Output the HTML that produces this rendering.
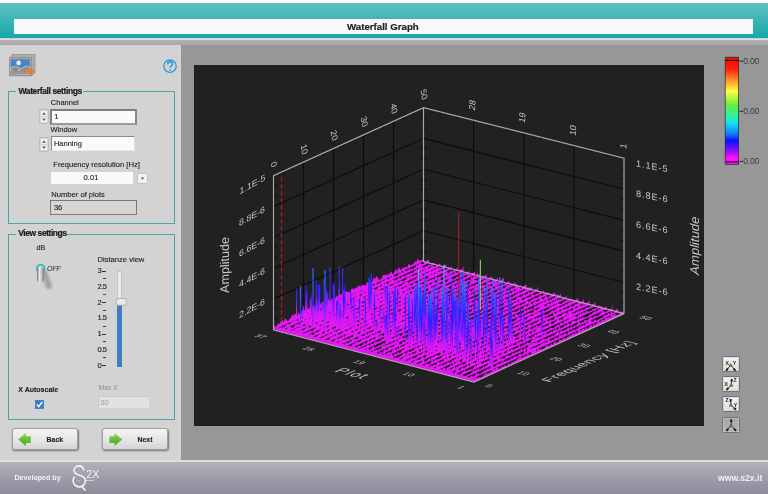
<!DOCTYPE html>
<html><head><meta charset="utf-8"><style>
*{box-sizing:border-box}
html{background:#a0a0a0}
body{margin:0;width:768px;height:494px;overflow:hidden;position:relative;font-family:"Liberation Sans", sans-serif;background:#d3d3d3;filter:blur(0.4px)}
.a{position:absolute}
.t{position:absolute;white-space:nowrap;line-height:1}
</style></head>
<body>
<div class="a" style="left:0;top:0;width:768px;height:2.8px;background:#fcfcfc"></div>
<div class="a" style="left:0;top:2.8px;width:768px;height:35.7px;background:linear-gradient(#5fc0c1,#17a7a8)"></div>
<div class="a" style="left:0;top:38.5px;width:768px;height:1.5px;background:#cfe3e3"></div>
<div class="a" style="left:0;top:40px;width:768px;height:5px;background:linear-gradient(#b3b3b3,#a6a6a6)"></div>
<div class="a" style="left:14px;top:19.2px;width:739.2px;height:14.8px;background:#f8f8f8"></div>
<div class="t" style="left:347px;top:22px;font-size:9.7px;font-weight:bold;color:#222;-webkit-text-stroke:0.2px #222">Waterfall Graph</div>
<div class="a" style="left:0;top:45px;width:181px;height:414.5px;background:#d3d3d3"></div>
<div class="a" style="left:181px;top:45px;width:587px;height:414.5px;background:#979797"></div>
<div class="a" style="left:0;top:459.5px;width:768px;height:2.5px;background:linear-gradient(#c8c8c8,#e6e6e8 40%,#dcdce0)"></div>
<div class="a" style="left:0;top:462px;width:768px;height:32px;background:linear-gradient(#b1b1bd,#8b8b99)"></div>
<div class="t" style="left:14.5px;top:474.5px;font-size:7.1px;font-weight:bold;color:#f2f2f2">Developed by</div>
<div class="t" style="left:718px;top:473.5px;font-size:8.65px;font-weight:bold;color:#f2f2f2">www.s2x.it</div>
<svg class="a" style="left:0;top:45px" width="181" height="40" viewBox="0 45 181 40">
<rect x="12.5" y="54.5" width="22.5" height="18" fill="#c4c4c4" stroke="#9a9a9a" stroke-width="1"/>
<rect x="11" y="56" width="22.5" height="18.5" fill="#bdbdbd" stroke="#9a9a9a" stroke-width="1"/>
<rect x="9.7" y="57.7" width="22" height="18" fill="#a9a9a9" stroke="#8a8a8a" stroke-width="1"/>
<rect x="11" y="59.3" width="18.8" height="14.5" fill="#4a86c5"/>
<circle cx="18.6" cy="62.9" r="2.3" fill="#e8eef4"/>
<rect x="11" y="69.5" width="18.8" height="4.3" fill="#9a9a9a"/>
<ellipse cx="15.2" cy="69.2" rx="4.6" ry="2.4" fill="#8c8c8c" stroke="#e8e8e8" stroke-width="0.7"/>
<path d="M18.5 70.5 Q22 67.8 26.4 66 Q28.5 66.4 29.8 67.3 L29.8 73.8 L18.5 73.8 Z" fill="#8e8e8e" stroke="#e8e8e8" stroke-width="0.6"/>
<rect x="11" y="71" width="18.8" height="2.8" fill="#959595"/>
<path d="M23.8 70 L29.5 70 L29.5 67.4 L34.8 71 L29.5 74.6 L29.5 72.1 L23.8 72.1 Z" fill="#f27a1a"/>
</svg>
<svg class="a" style="left:160px;top:55.6px" width="20" height="20" viewBox="160 55 20 20">
<circle cx="170" cy="65.2" r="6.2" fill="none" stroke="#2c9bd9" stroke-width="1.3"/>
<path d="M167.6 63.4 Q167.8 60.9 170.2 60.9 Q172.6 60.9 172.6 63.1 Q172.6 64.4 171.2 65.1 Q170.2 65.6 170.2 66.8" fill="none" stroke="#2c9bd9" stroke-width="1.6"/>
<circle cx="170.2" cy="68.9" r="0.95" fill="#2c9bd9"/>
</svg>
<div class="a" style="left:8.2px;top:90.8px;width:166.5px;height:133px;border:1.5px solid #4aa6a6"></div>
<div class="a" style="left:16.2px;top:87.8px;width:67px;height:6px;background:#d3d3d3"></div>
<div class="t" style="left:18.5px;top:86.5px;font-size:8.5px;font-weight:bold;letter-spacing:-0.4px;color:#1a1a1a;-webkit-text-stroke:0.2px #1a1a1a">Waterfall settings</div>
<div class="a" style="left:8px;top:233.5px;width:166.8px;height:186.5px;border:1.5px solid #4aa6a6"></div>
<div class="a" style="left:16px;top:230.5px;width:50px;height:6px;background:#d3d3d3"></div>
<div class="t" style="left:18.3px;top:229.3px;font-size:8.5px;font-weight:bold;letter-spacing:-0.45px;color:#1a1a1a;-webkit-text-stroke:0.2px #1a1a1a">View settings</div>
<div class="t" style="left:50.8px;top:98.5px;font-size:7.5px;color:#1c1c1c;-webkit-text-stroke:0.12px #1c1c1c;">Channel</div>
<svg class="a" style="left:38.5px;top:109px" width="10" height="15" viewBox="0 0 10 15">
<rect x="0.5" y="0.5" width="9" height="14" rx="1.5" fill="#dcdcdc" stroke="#bdbdbd" stroke-width="1"/>
<rect x="1.5" y="1.5" width="7" height="5.8" rx="0.8" fill="#f4f4f4" stroke="#c8c8c8" stroke-width="0.6"/>
<rect x="1.5" y="7.7" width="7" height="5.8" rx="0.8" fill="#f4f4f4" stroke="#c8c8c8" stroke-width="0.6"/>
<path d="M2.9 5.8 L5 3.3 L7.1 5.8 Z" fill="#666"/>
<path d="M2.9 9.4 L5 11.9 L7.1 9.4 Z" fill="#666"/>
</svg>
<div class="a" style="left:50px;top:108.5px;width:87px;height:16px;background:#fafafa;border:2px solid #7e7e7e;border-bottom-color:#9a9a9a;border-right-color:#8a8a8a"></div>
<div class="t" style="left:54.3px;top:113px;font-size:7.5px;color:#1c1c1c;-webkit-text-stroke:0.12px #1c1c1c;">1</div>
<div class="t" style="left:50.5px;top:125.5px;font-size:7.5px;color:#1c1c1c;-webkit-text-stroke:0.12px #1c1c1c;">Window</div>
<svg class="a" style="left:38.5px;top:136.5px" width="10" height="15" viewBox="0 0 10 15">
<rect x="0.5" y="0.5" width="9" height="14" rx="1.5" fill="#dcdcdc" stroke="#bdbdbd" stroke-width="1"/>
<rect x="1.5" y="1.5" width="7" height="5.8" rx="0.8" fill="#f4f4f4" stroke="#c8c8c8" stroke-width="0.6"/>
<rect x="1.5" y="7.7" width="7" height="5.8" rx="0.8" fill="#f4f4f4" stroke="#c8c8c8" stroke-width="0.6"/>
<path d="M2.9 5.8 L5 3.3 L7.1 5.8 Z" fill="#666"/>
<path d="M2.9 9.4 L5 11.9 L7.1 9.4 Z" fill="#666"/>
</svg>
<div class="a" style="left:50.8px;top:136px;width:84px;height:14.5px;background:#fafafa;border-top:1.5px solid #8a8a8a;border-left:1.5px solid #8a8a8a;border-bottom:1px solid #e8e8e8;border-right:1px solid #e0e0e0"></div>
<div class="t" style="left:53.9px;top:139.5px;font-size:7.5px;color:#1c1c1c;-webkit-text-stroke:0.12px #1c1c1c;">Hanning</div>
<div class="t" style="left:53.3px;top:161px;font-size:7.6px;color:#1c1c1c;-webkit-text-stroke:0.12px #1c1c1c;">Frequency resolution [Hz]</div>
<div class="a" style="left:50.8px;top:171.5px;width:82px;height:12px;background:#fafafa"></div>
<div class="t" style="left:83.6px;top:174px;font-size:7.6px;color:#1c1c1c;-webkit-text-stroke:0.12px #1c1c1c;">0.01</div>
<svg class="a" style="left:137px;top:172.8px" width="11" height="11" viewBox="0 0 11 11">
<rect x="0.5" y="0.5" width="10" height="10" rx="2" fill="#f2f2f2" stroke="#b8b8b8" stroke-width="0.8"/>
<path d="M3.6 4.6 L5.5 6.8 L7.4 4.6 Z" fill="#606060"/></svg>
<div class="t" style="left:51.3px;top:190.5px;font-size:7.6px;color:#1c1c1c;-webkit-text-stroke:0.12px #1c1c1c;">Number of plots</div>
<div class="a" style="left:50.2px;top:199.8px;width:86.7px;height:15.6px;background:#d6d6d6;border:1.6px solid #7a7a7a"></div>
<div class="t" style="left:53.9px;top:203.5px;font-size:7.6px;color:#1c1c1c;-webkit-text-stroke:0.12px #1c1c1c;">36</div>
<div class="t" style="left:36.4px;top:243.8px;font-size:7.3px;color:#1c1c1c;-webkit-text-stroke:0.12px #1c1c1c;">dB</div>
<svg class="a" style="left:28px;top:258px" width="36" height="36" viewBox="28 258 36 36">
<defs><linearGradient id="tg" x1="0" x2="1"><stop offset="0" stop-color="#707070"/><stop offset="0.35" stop-color="#ececec"/><stop offset="0.7" stop-color="#b4b4b4"/><stop offset="1" stop-color="#7a7a7a"/></linearGradient>
<filter id="bl" x="-50%" y="-50%" width="200%" height="200%"><feGaussianBlur stdDeviation="1.3"/></filter></defs>
<path d="M41.5 271 L46.5 270 L52 286 Q52 289 49 289 L46 288 Z" fill="#000" opacity="0.22" filter="url(#bl)"/>
<circle cx="40.7" cy="268.6" r="3.9" fill="#dcdcdc" stroke="#3cbcbc" stroke-width="2"/>
<rect x="37.1" y="266.8" width="7" height="15.7" rx="3.5" fill="url(#tg)"/>
<ellipse cx="39.6" cy="277.4" rx="1.2" ry="0.8" fill="#fafafa" opacity="0.8"/>
</svg>
<div class="t" style="left:47.1px;top:265.2px;font-size:7.2px;color:#3a3a48;-webkit-text-stroke:0.12px #3a3a48;font-style:italic;letter-spacing:-0.3px">OFF</div>
<div class="t" style="left:97.5px;top:255.8px;font-size:7.6px;color:#1c1c1c;-webkit-text-stroke:0.12px #1c1c1c;">Distanze view</div>
<div class="t" style="left:97.5px;top:267.1px;font-size:7.6px;color:#1c1c1c;-webkit-text-stroke:0.12px #1c1c1c;letter-spacing:-0.5px">3</div>
<div class="a" style="left:101.5px;top:270.5px;width:4px;height:1.1px;background:#333"></div>
<div class="a" style="left:103.2px;top:278.4px;width:2.6px;height:1.1px;background:#444"></div>
<div class="t" style="left:97.5px;top:282.85px;font-size:7.6px;color:#1c1c1c;-webkit-text-stroke:0.12px #1c1c1c;letter-spacing:-0.5px">2.5</div>
<div class="a" style="left:103.2px;top:294.15px;width:2.6px;height:1.1px;background:#444"></div>
<div class="t" style="left:97.5px;top:298.6px;font-size:7.6px;color:#1c1c1c;-webkit-text-stroke:0.12px #1c1c1c;letter-spacing:-0.5px">2</div>
<div class="a" style="left:101.5px;top:302.0px;width:4px;height:1.1px;background:#333"></div>
<div class="a" style="left:103.2px;top:309.9px;width:2.6px;height:1.1px;background:#444"></div>
<div class="t" style="left:97.5px;top:314.35px;font-size:7.6px;color:#1c1c1c;-webkit-text-stroke:0.12px #1c1c1c;letter-spacing:-0.5px">1.5</div>
<div class="a" style="left:103.2px;top:325.65px;width:2.6px;height:1.1px;background:#444"></div>
<div class="t" style="left:97.5px;top:330.1px;font-size:7.6px;color:#1c1c1c;-webkit-text-stroke:0.12px #1c1c1c;letter-spacing:-0.5px">1</div>
<div class="a" style="left:101.5px;top:333.5px;width:4px;height:1.1px;background:#333"></div>
<div class="a" style="left:103.2px;top:341.4px;width:2.6px;height:1.1px;background:#444"></div>
<div class="t" style="left:97.5px;top:345.85px;font-size:7.6px;color:#1c1c1c;-webkit-text-stroke:0.12px #1c1c1c;letter-spacing:-0.5px">0.5</div>
<div class="a" style="left:103.2px;top:357.15px;width:2.6px;height:1.1px;background:#444"></div>
<div class="t" style="left:97.5px;top:361.6px;font-size:7.6px;color:#1c1c1c;-webkit-text-stroke:0.12px #1c1c1c;letter-spacing:-0.5px">0</div>
<div class="a" style="left:101.5px;top:365.0px;width:4px;height:1.1px;background:#333"></div>
<div class="a" style="left:117.3px;top:270.5px;width:5.2px;height:31px;background:#e9ebed;border:1px solid #c0c4c8;border-bottom:none"></div>
<div class="a" style="left:117.3px;top:303px;width:5.2px;height:63.5px;background:#3f7fc1"></div>
<svg class="a" style="left:114px;top:297px" width="14" height="10" viewBox="0 0 14 10">
<path d="M1.5 5 L3.5 1.5 L12.3 1.5 L12.3 8.3 L3.5 8.3 Z" fill="#e6e8ea" stroke="#a8a8a8" stroke-width="0.8"/></svg>
<div class="t" style="left:18.3px;top:385.5px;font-size:7.0px;color:#1c1c1c;-webkit-text-stroke:0.12px #1c1c1c;font-weight:bold">X Autoscale</div>
<svg class="a" style="left:34.5px;top:399.5px" width="9" height="9" viewBox="0 0 9 9">
<rect x="0.5" y="0.5" width="8" height="8" fill="#3b7ec6" stroke="#2e67a8" stroke-width="0.6"/>
<path d="M1.9 4.5 L3.7 6.6 L7.2 2.0" fill="none" stroke="#fff" stroke-width="1.3"/></svg>
<div class="t" style="left:98.4px;top:385.0px;font-size:6.9px;color:#9a9a9a;-webkit-text-stroke:0.12px #9a9a9a;">Max X</div>
<div class="a" style="left:98px;top:395.8px;width:50.8px;height:12.4px;background:#e2e2e2;border-top:1px solid #c8c8c8;border-left:1px solid #c8c8c8"></div>
<div class="t" style="left:100.5px;top:398.5px;font-size:7.4px;color:#a8a8a8;-webkit-text-stroke:0.12px #a8a8a8;">50</div>
<div class="a" style="left:11.5px;top:428.2px;width:66.4px;height:21.4px;border-radius:3px;background:linear-gradient(#f4f4f4,#e4e4e4 60%,#d4d4d4);border:1px solid #a0a0a0;box-shadow:0.5px 1px 1.5px rgba(0,0,0,0.45)"></div>
<svg class="a" style="left:0;top:0" width="181" height="460" viewBox="0 0 181 460"><defs><linearGradient id="gal" x1="0" y1="0" x2="0" y2="1"><stop offset="0" stop-color="#8fd456"/><stop offset="1" stop-color="#44a81c"/></linearGradient></defs><path d="M18.1 439.4 L25.8 432.9 L25.8 436.2 L30.8 436.2 L30.8 443 L25.8 443 L25.8 446 Z" fill="url(#gal)"/></svg>
<div class="t" style="left:46.6px;top:437.0px;font-size:6.9px;color:#1c1c1c;-webkit-text-stroke:0.12px #1c1c1c;font-weight:bold">Back</div>
<div class="a" style="left:102px;top:428.2px;width:66.4px;height:21.4px;border-radius:3px;background:linear-gradient(#f4f4f4,#e4e4e4 60%,#d4d4d4);border:1px solid #a0a0a0;box-shadow:0.5px 1px 1.5px rgba(0,0,0,0.45)"></div>
<svg class="a" style="left:0;top:0" width="181" height="460" viewBox="0 0 181 460"><defs><linearGradient id="gar" x1="0" y1="0" x2="0" y2="1"><stop offset="0" stop-color="#8fd456"/><stop offset="1" stop-color="#44a81c"/></linearGradient></defs><path d="M122.2 439.4 L114.5 432.9 L114.5 436.2 L109.5 436.2 L109.5 443 L114.5 443 L114.5 446 Z" fill="url(#gar)"/></svg>
<div class="t" style="left:137.5px;top:437.0px;font-size:6.9px;color:#1c1c1c;-webkit-text-stroke:0.12px #1c1c1c;font-weight:bold">Next</div>
<svg class="a" style="left:715px;top:50px" width="53" height="125" viewBox="715 50 53 125">
<defs><linearGradient id="cb" x1="0" y1="0" x2="0" y2="1">
<stop offset="0" stop-color="#ff0a0a"/><stop offset="0.08" stop-color="#ff2010"/><stop offset="0.17" stop-color="#ff8020"/><stop offset="0.30" stop-color="#ffff40"/>
<stop offset="0.44" stop-color="#60f040"/><stop offset="0.55" stop-color="#30f0a0"/><stop offset="0.62" stop-color="#10e0f0"/><stop offset="0.72" stop-color="#1080ff"/><stop offset="0.79" stop-color="#0a10ff"/><stop offset="0.90" stop-color="#9010ff"/><stop offset="0.96" stop-color="#ff10ff"/><stop offset="1" stop-color="#ff10ff"/></linearGradient></defs>
<rect x="724.8" y="56.8" width="14.2" height="108" fill="#333"/>
<rect x="725.6" y="57.6" width="12.6" height="2.3" fill="#ee1010"/>
<rect x="725.6" y="59.9" width="12.6" height="1.2" fill="#3a0000"/>
<rect x="725.6" y="61.1" width="12.6" height="100.6" fill="url(#cb)"/>
<rect x="725.6" y="161.3" width="12.6" height="1.2" fill="#3a003a"/>
<rect x="725.6" y="162.5" width="12.6" height="1.6" fill="#f010f0"/>
<path d="M739.5 61.2 h3.5 M739.5 111.3 h3.5 M739.5 161.4 h3.5" stroke="#2a2a2a" stroke-width="1"/>
</svg>
<div class="t" style="left:740.5px;top:56.6px;font-size:8.6px;color:#3a3a3a;letter-spacing:-0.2px">-0.00</div>
<div class="t" style="left:740.5px;top:106.7px;font-size:8.6px;color:#3a3a3a;letter-spacing:-0.2px">-0.00</div>
<div class="t" style="left:740.5px;top:156.8px;font-size:8.6px;color:#3a3a3a;letter-spacing:-0.2px">-0.00</div>
<div class="a" style="left:722.4px;top:356.4px;width:17.6px;height:15.8px;border-radius:1.5px;background:linear-gradient(#f4f4f4,#dedede);border:1px solid #747474;box-shadow:inset 0 0 0 0.6px #c8c8c8"></div>
<svg class="a" style="left:0;top:0" width="768" height="494" viewBox="0 0 768 494">
<path d="M730.7 365.0 L726.2 370.6M730.7 365.0 L735.4 370.6" stroke="#262626" stroke-width="0.8" fill="none"/>
<path d="M728.0 368.4 L726.2 370.6M733.6 368.5 L735.4 370.6" stroke="#1a1a1a" stroke-width="1.9" fill="none"/>
<path d="M729.0 366.3 L730.7 363.4 L732.4 366.3 Z" fill="#9a9a18" stroke="#3a3a10" stroke-width="0.5"/><text x="727.3" y="363.2" font-size="5.2" font-weight="bold" font-family="Liberation Sans" text-anchor="middle" dominant-baseline="central" fill="#1a1a1a">X</text><text x="734.6" y="363.2" font-size="5.2" font-weight="bold" font-family="Liberation Sans" text-anchor="middle" dominant-baseline="central" fill="#1a1a1a">Y</text></svg>
<div class="a" style="left:722.4px;top:376.4px;width:17.6px;height:15.8px;border-radius:1.5px;background:linear-gradient(#f4f4f4,#dedede);border:1px solid #747474;box-shadow:inset 0 0 0 0.6px #c8c8c8"></div>
<svg class="a" style="left:0;top:0" width="768" height="494" viewBox="0 0 768 494">
<path d="M731.3 385.0 L731.7 379.0M731.3 385.0 L726.5 389.8" stroke="#262626" stroke-width="0.8" fill="none"/>
<path d="M731.5 381.8 L731.7 379.0M728.5 387.8 L726.5 389.8" stroke="#1a1a1a" stroke-width="1.9" fill="none"/>
<path d="M729.6 386.3 L731.3 383.4 L733.0 386.3 Z" fill="#9a9a18" stroke="#3a3a10" stroke-width="0.5"/><text x="735.2" y="380.2" font-size="5.2" font-weight="bold" font-family="Liberation Sans" text-anchor="middle" dominant-baseline="central" fill="#1a1a1a">Z</text><text x="726.2" y="384.0" font-size="5.2" font-weight="bold" font-family="Liberation Sans" text-anchor="middle" dominant-baseline="central" fill="#1a1a1a">X</text></svg>
<div class="a" style="left:722.4px;top:396.4px;width:17.6px;height:15.8px;border-radius:1.5px;background:linear-gradient(#f4f4f4,#dedede);border:1px solid #747474;box-shadow:inset 0 0 0 0.6px #c8c8c8"></div>
<svg class="a" style="left:0;top:0" width="768" height="494" viewBox="0 0 768 494">
<path d="M730.9 405.0 L730.6 399.0M730.9 405.0 L735.9 409.8" stroke="#262626" stroke-width="0.8" fill="none"/>
<path d="M730.7 401.8 L730.6 399.0M733.9 407.9 L735.9 409.8" stroke="#1a1a1a" stroke-width="1.9" fill="none"/>
<path d="M729.2 406.3 L730.9 403.4 L732.6 406.3 Z" fill="#9a9a18" stroke="#3a3a10" stroke-width="0.5"/><text x="727.0" y="400.2" font-size="5.2" font-weight="bold" font-family="Liberation Sans" text-anchor="middle" dominant-baseline="central" fill="#1a1a1a">Z</text><text x="735.6" y="405.0" font-size="5.2" font-weight="bold" font-family="Liberation Sans" text-anchor="middle" dominant-baseline="central" fill="#1a1a1a">Y</text></svg>
<div class="a" style="left:722.4px;top:417px;width:17.6px;height:15.8px;border-radius:1.5px;background:linear-gradient(#a6a6a6,#b4b4b4);border:1px solid #747474;box-shadow:inset 0 0 0 0.6px #c8c8c8"></div>
<svg class="a" style="left:0;top:0" width="768" height="494" viewBox="0 0 768 494">
<path d="M731.2 425.4 L731.2 419.4M731.2 425.4 L726.4 430.8M731.2 425.4 L736.0 430.8" stroke="#262626" stroke-width="0.8" fill="none"/>
<path d="M731.2 422.2 L731.2 419.4M728.3 428.7 L726.4 430.8M734.1 428.7 L736.0 430.8" stroke="#1a1a1a" stroke-width="1.9" fill="none"/>
<path d="M729.5 426.7 L731.2 423.8 L732.9 426.7 Z" fill="#9a9a18" stroke="#3a3a10" stroke-width="0.5"/></svg>
<svg class="a" style="left:66px;top:462px" width="40" height="32" viewBox="66 462 40 32">
<path d="M83.8 470.7 C83.5 467.5 81.5 465.9 78.9 465.9 C76 465.9 74.1 468 74.1 470.4 C74.1 473.2 77 474.5 79.6 475.3 C83 476.3 85.4 478 85.4 480.8 C85.4 484.4 82.6 486.9 79.3 486.9 C76 486.9 73.1 484.4 73.1 480.8 C73.1 478.8 73.8 477.5 74.7 476.6" fill="none" stroke="#f6f6f6" stroke-width="1.6"/>
<path d="M81.6 486.2 L85.4 490.5" stroke="#f6f6f6" stroke-width="1.7"/>
<path d="M76.5 481 q1 -1.2 2 -0.3 q1 0.9 2 -0.5" stroke="#e6e6e6" stroke-width="0.6" fill="none"/>
<path d="M85.4 480.4 L94 480.4" stroke="#e4e4e4" stroke-width="0.8"/>
<text x="86.3" y="478.4" font-size="10.6" font-family="Liberation Sans" fill="#f6f6f6">2X</text>
</svg>
<div class="a" style="left:194px;top:64.5px;width:509.5px;height:361px;background:#212121"></div>
<svg class="a" style="left:0;top:0" width="768" height="494" viewBox="0 0 768 494">
<path d="M303.5,316.3L303.5,162.0M333.5,302.6L333.5,148.4M363.5,288.9L363.5,134.8M393.5,275.2L393.5,121.2M273.5,299.1L423.5,230.7M273.5,268.2L423.5,199.9M273.5,237.4L423.5,169.2M273.5,206.5L423.5,138.4M473.6,274.5L473.6,120.2M523.8,287.6L523.8,132.9M573.9,300.6L573.9,145.5M423.5,230.7L624.0,282.5M423.5,199.9L624.0,251.4M423.5,169.2L624.0,220.4M423.5,138.4L624.0,189.3" stroke="#0c0c0c" stroke-width="1.1" fill="none"/>
<path d="M273.5,319.7l3,-1.2M420.5,251.2l6,0M624.0,303.2l-3,-0.8M273.5,309.4l3,-1.2M420.5,241.0l6,0M624.0,292.9l-3,-0.8M273.5,288.8l3,-1.2M420.5,220.5l6,0M624.0,272.2l-3,-0.8M273.5,278.5l3,-1.2M420.5,210.2l6,0M624.0,261.8l-3,-0.8M273.5,257.9l3,-1.2M420.5,189.7l6,0M624.0,241.1l-3,-0.8M273.5,247.7l3,-1.2M420.5,179.4l6,0M624.0,230.7l-3,-0.8M273.5,227.1l3,-1.2M420.5,158.9l6,0M624.0,210.0l-3,-0.8M273.5,216.8l3,-1.2M420.5,148.6l6,0M624.0,199.6l-3,-0.8M273.5,196.2l3,-1.2M420.5,128.1l6,0M624.0,178.9l-3,-0.8M273.5,185.9l3,-1.2M420.5,117.9l6,0M624.0,168.6l-3,-0.8M283.5,171.1l0,3M293.5,166.5l0,3M313.5,157.5l0,3M323.5,152.9l0,3M343.5,143.9l0,3M353.5,139.3l0,3M373.5,130.3l0,3M383.5,125.7l0,3M403.5,116.7l0,3M413.5,112.1l0,3M440.2,111.8l0,3M456.9,116.0l0,3M490.3,124.5l0,3M507.0,128.7l0,3M540.5,137.1l0,3M557.2,141.3l0,3M590.6,149.8l0,3M607.3,154.0l0,3" stroke="#0a0a0a" stroke-width="1" fill="none"/>
<path d="M281.5,177 L281.5,328" stroke="#b3191c" stroke-width="1.3" stroke-dasharray="4.5,2.5" fill="none"/>
<path d="M273.5,330.0L423.5,261.5L624.0,313.6L474.0,382.0Z" fill="#1a1a1a"/>
<defs>
<linearGradient id="g0" gradientUnits="userSpaceOnUse" x1="0" y1="454.9" x2="0" y2="329.9" gradientTransform="skewY(-24.54)"><stop offset="0" stop-color="#ea16f6"/><stop offset="0.06" stop-color="#dc18f8"/><stop offset="0.13" stop-color="#7020ff"/><stop offset="0.24" stop-color="#2a1cff"/><stop offset="0.45" stop-color="#2468ff"/><stop offset="0.6" stop-color="#20c8ee"/><stop offset="0.72" stop-color="#70e040"/><stop offset="0.85" stop-color="#f0e030"/><stop offset="1" stop-color="#e02020"/></linearGradient>
<linearGradient id="g1" gradientUnits="userSpaceOnUse" x1="0" y1="459.0" x2="0" y2="334.0" gradientTransform="skewY(-24.54)"><stop offset="0" stop-color="#ea16f6"/><stop offset="0.06" stop-color="#dc18f8"/><stop offset="0.13" stop-color="#7020ff"/><stop offset="0.24" stop-color="#2a1cff"/><stop offset="0.45" stop-color="#2468ff"/><stop offset="0.6" stop-color="#20c8ee"/><stop offset="0.72" stop-color="#70e040"/><stop offset="0.85" stop-color="#f0e030"/><stop offset="1" stop-color="#e02020"/></linearGradient>
<linearGradient id="g2" gradientUnits="userSpaceOnUse" x1="0" y1="463.1" x2="0" y2="338.1" gradientTransform="skewY(-24.54)"><stop offset="0" stop-color="#ea16f6"/><stop offset="0.06" stop-color="#dc18f8"/><stop offset="0.13" stop-color="#7020ff"/><stop offset="0.24" stop-color="#2a1cff"/><stop offset="0.45" stop-color="#2468ff"/><stop offset="0.6" stop-color="#20c8ee"/><stop offset="0.72" stop-color="#70e040"/><stop offset="0.85" stop-color="#f0e030"/><stop offset="1" stop-color="#e02020"/></linearGradient>
<linearGradient id="g3" gradientUnits="userSpaceOnUse" x1="0" y1="467.2" x2="0" y2="342.2" gradientTransform="skewY(-24.54)"><stop offset="0" stop-color="#ea16f6"/><stop offset="0.06" stop-color="#dc18f8"/><stop offset="0.13" stop-color="#7020ff"/><stop offset="0.24" stop-color="#2a1cff"/><stop offset="0.45" stop-color="#2468ff"/><stop offset="0.6" stop-color="#20c8ee"/><stop offset="0.72" stop-color="#70e040"/><stop offset="0.85" stop-color="#f0e030"/><stop offset="1" stop-color="#e02020"/></linearGradient>
<linearGradient id="g4" gradientUnits="userSpaceOnUse" x1="0" y1="471.3" x2="0" y2="346.3" gradientTransform="skewY(-24.54)"><stop offset="0" stop-color="#ea16f6"/><stop offset="0.06" stop-color="#dc18f8"/><stop offset="0.13" stop-color="#7020ff"/><stop offset="0.24" stop-color="#2a1cff"/><stop offset="0.45" stop-color="#2468ff"/><stop offset="0.6" stop-color="#20c8ee"/><stop offset="0.72" stop-color="#70e040"/><stop offset="0.85" stop-color="#f0e030"/><stop offset="1" stop-color="#e02020"/></linearGradient>
<linearGradient id="g5" gradientUnits="userSpaceOnUse" x1="0" y1="475.4" x2="0" y2="350.4" gradientTransform="skewY(-24.54)"><stop offset="0" stop-color="#ea16f6"/><stop offset="0.06" stop-color="#dc18f8"/><stop offset="0.13" stop-color="#7020ff"/><stop offset="0.24" stop-color="#2a1cff"/><stop offset="0.45" stop-color="#2468ff"/><stop offset="0.6" stop-color="#20c8ee"/><stop offset="0.72" stop-color="#70e040"/><stop offset="0.85" stop-color="#f0e030"/><stop offset="1" stop-color="#e02020"/></linearGradient>
<linearGradient id="g6" gradientUnits="userSpaceOnUse" x1="0" y1="479.5" x2="0" y2="354.5" gradientTransform="skewY(-24.54)"><stop offset="0" stop-color="#ea16f6"/><stop offset="0.06" stop-color="#dc18f8"/><stop offset="0.13" stop-color="#7020ff"/><stop offset="0.24" stop-color="#2a1cff"/><stop offset="0.45" stop-color="#2468ff"/><stop offset="0.6" stop-color="#20c8ee"/><stop offset="0.72" stop-color="#70e040"/><stop offset="0.85" stop-color="#f0e030"/><stop offset="1" stop-color="#e02020"/></linearGradient>
<linearGradient id="g7" gradientUnits="userSpaceOnUse" x1="0" y1="483.6" x2="0" y2="358.6" gradientTransform="skewY(-24.54)"><stop offset="0" stop-color="#ea16f6"/><stop offset="0.06" stop-color="#dc18f8"/><stop offset="0.13" stop-color="#7020ff"/><stop offset="0.24" stop-color="#2a1cff"/><stop offset="0.45" stop-color="#2468ff"/><stop offset="0.6" stop-color="#20c8ee"/><stop offset="0.72" stop-color="#70e040"/><stop offset="0.85" stop-color="#f0e030"/><stop offset="1" stop-color="#e02020"/></linearGradient>
<linearGradient id="g8" gradientUnits="userSpaceOnUse" x1="0" y1="487.7" x2="0" y2="362.7" gradientTransform="skewY(-24.54)"><stop offset="0" stop-color="#ea16f6"/><stop offset="0.06" stop-color="#dc18f8"/><stop offset="0.13" stop-color="#7020ff"/><stop offset="0.24" stop-color="#2a1cff"/><stop offset="0.45" stop-color="#2468ff"/><stop offset="0.6" stop-color="#20c8ee"/><stop offset="0.72" stop-color="#70e040"/><stop offset="0.85" stop-color="#f0e030"/><stop offset="1" stop-color="#e02020"/></linearGradient>
<linearGradient id="g9" gradientUnits="userSpaceOnUse" x1="0" y1="491.8" x2="0" y2="366.8" gradientTransform="skewY(-24.54)"><stop offset="0" stop-color="#ea16f6"/><stop offset="0.06" stop-color="#dc18f8"/><stop offset="0.13" stop-color="#7020ff"/><stop offset="0.24" stop-color="#2a1cff"/><stop offset="0.45" stop-color="#2468ff"/><stop offset="0.6" stop-color="#20c8ee"/><stop offset="0.72" stop-color="#70e040"/><stop offset="0.85" stop-color="#f0e030"/><stop offset="1" stop-color="#e02020"/></linearGradient>
<linearGradient id="g10" gradientUnits="userSpaceOnUse" x1="0" y1="495.9" x2="0" y2="370.9" gradientTransform="skewY(-24.54)"><stop offset="0" stop-color="#ea16f6"/><stop offset="0.06" stop-color="#dc18f8"/><stop offset="0.13" stop-color="#7020ff"/><stop offset="0.24" stop-color="#2a1cff"/><stop offset="0.45" stop-color="#2468ff"/><stop offset="0.6" stop-color="#20c8ee"/><stop offset="0.72" stop-color="#70e040"/><stop offset="0.85" stop-color="#f0e030"/><stop offset="1" stop-color="#e02020"/></linearGradient>
<linearGradient id="g11" gradientUnits="userSpaceOnUse" x1="0" y1="500.0" x2="0" y2="375.0" gradientTransform="skewY(-24.54)"><stop offset="0" stop-color="#ea16f6"/><stop offset="0.06" stop-color="#dc18f8"/><stop offset="0.13" stop-color="#7020ff"/><stop offset="0.24" stop-color="#2a1cff"/><stop offset="0.45" stop-color="#2468ff"/><stop offset="0.6" stop-color="#20c8ee"/><stop offset="0.72" stop-color="#70e040"/><stop offset="0.85" stop-color="#f0e030"/><stop offset="1" stop-color="#e02020"/></linearGradient>
<linearGradient id="g12" gradientUnits="userSpaceOnUse" x1="0" y1="504.2" x2="0" y2="379.2" gradientTransform="skewY(-24.54)"><stop offset="0" stop-color="#ea16f6"/><stop offset="0.06" stop-color="#dc18f8"/><stop offset="0.13" stop-color="#7020ff"/><stop offset="0.24" stop-color="#2a1cff"/><stop offset="0.45" stop-color="#2468ff"/><stop offset="0.6" stop-color="#20c8ee"/><stop offset="0.72" stop-color="#70e040"/><stop offset="0.85" stop-color="#f0e030"/><stop offset="1" stop-color="#e02020"/></linearGradient>
<linearGradient id="g13" gradientUnits="userSpaceOnUse" x1="0" y1="508.3" x2="0" y2="383.3" gradientTransform="skewY(-24.54)"><stop offset="0" stop-color="#ea16f6"/><stop offset="0.06" stop-color="#dc18f8"/><stop offset="0.13" stop-color="#7020ff"/><stop offset="0.24" stop-color="#2a1cff"/><stop offset="0.45" stop-color="#2468ff"/><stop offset="0.6" stop-color="#20c8ee"/><stop offset="0.72" stop-color="#70e040"/><stop offset="0.85" stop-color="#f0e030"/><stop offset="1" stop-color="#e02020"/></linearGradient>
<linearGradient id="g14" gradientUnits="userSpaceOnUse" x1="0" y1="512.4" x2="0" y2="387.4" gradientTransform="skewY(-24.54)"><stop offset="0" stop-color="#ea16f6"/><stop offset="0.06" stop-color="#dc18f8"/><stop offset="0.13" stop-color="#7020ff"/><stop offset="0.24" stop-color="#2a1cff"/><stop offset="0.45" stop-color="#2468ff"/><stop offset="0.6" stop-color="#20c8ee"/><stop offset="0.72" stop-color="#70e040"/><stop offset="0.85" stop-color="#f0e030"/><stop offset="1" stop-color="#e02020"/></linearGradient>
<linearGradient id="g15" gradientUnits="userSpaceOnUse" x1="0" y1="516.5" x2="0" y2="391.5" gradientTransform="skewY(-24.54)"><stop offset="0" stop-color="#ea16f6"/><stop offset="0.06" stop-color="#dc18f8"/><stop offset="0.13" stop-color="#7020ff"/><stop offset="0.24" stop-color="#2a1cff"/><stop offset="0.45" stop-color="#2468ff"/><stop offset="0.6" stop-color="#20c8ee"/><stop offset="0.72" stop-color="#70e040"/><stop offset="0.85" stop-color="#f0e030"/><stop offset="1" stop-color="#e02020"/></linearGradient>
<linearGradient id="g16" gradientUnits="userSpaceOnUse" x1="0" y1="520.6" x2="0" y2="395.6" gradientTransform="skewY(-24.54)"><stop offset="0" stop-color="#ea16f6"/><stop offset="0.06" stop-color="#dc18f8"/><stop offset="0.13" stop-color="#7020ff"/><stop offset="0.24" stop-color="#2a1cff"/><stop offset="0.45" stop-color="#2468ff"/><stop offset="0.6" stop-color="#20c8ee"/><stop offset="0.72" stop-color="#70e040"/><stop offset="0.85" stop-color="#f0e030"/><stop offset="1" stop-color="#e02020"/></linearGradient>
<linearGradient id="g17" gradientUnits="userSpaceOnUse" x1="0" y1="524.7" x2="0" y2="399.7" gradientTransform="skewY(-24.54)"><stop offset="0" stop-color="#ea16f6"/><stop offset="0.06" stop-color="#dc18f8"/><stop offset="0.13" stop-color="#7020ff"/><stop offset="0.24" stop-color="#2a1cff"/><stop offset="0.45" stop-color="#2468ff"/><stop offset="0.6" stop-color="#20c8ee"/><stop offset="0.72" stop-color="#70e040"/><stop offset="0.85" stop-color="#f0e030"/><stop offset="1" stop-color="#e02020"/></linearGradient>
<linearGradient id="g18" gradientUnits="userSpaceOnUse" x1="0" y1="528.8" x2="0" y2="403.8" gradientTransform="skewY(-24.54)"><stop offset="0" stop-color="#ea16f6"/><stop offset="0.06" stop-color="#dc18f8"/><stop offset="0.13" stop-color="#7020ff"/><stop offset="0.24" stop-color="#2a1cff"/><stop offset="0.45" stop-color="#2468ff"/><stop offset="0.6" stop-color="#20c8ee"/><stop offset="0.72" stop-color="#70e040"/><stop offset="0.85" stop-color="#f0e030"/><stop offset="1" stop-color="#e02020"/></linearGradient>
<linearGradient id="g19" gradientUnits="userSpaceOnUse" x1="0" y1="532.9" x2="0" y2="407.9" gradientTransform="skewY(-24.54)"><stop offset="0" stop-color="#ea16f6"/><stop offset="0.06" stop-color="#dc18f8"/><stop offset="0.13" stop-color="#7020ff"/><stop offset="0.24" stop-color="#2a1cff"/><stop offset="0.45" stop-color="#2468ff"/><stop offset="0.6" stop-color="#20c8ee"/><stop offset="0.72" stop-color="#70e040"/><stop offset="0.85" stop-color="#f0e030"/><stop offset="1" stop-color="#e02020"/></linearGradient>
<linearGradient id="g20" gradientUnits="userSpaceOnUse" x1="0" y1="537.0" x2="0" y2="412.0" gradientTransform="skewY(-24.54)"><stop offset="0" stop-color="#ea16f6"/><stop offset="0.06" stop-color="#dc18f8"/><stop offset="0.13" stop-color="#7020ff"/><stop offset="0.24" stop-color="#2a1cff"/><stop offset="0.45" stop-color="#2468ff"/><stop offset="0.6" stop-color="#20c8ee"/><stop offset="0.72" stop-color="#70e040"/><stop offset="0.85" stop-color="#f0e030"/><stop offset="1" stop-color="#e02020"/></linearGradient>
<linearGradient id="g21" gradientUnits="userSpaceOnUse" x1="0" y1="541.1" x2="0" y2="416.1" gradientTransform="skewY(-24.54)"><stop offset="0" stop-color="#ea16f6"/><stop offset="0.06" stop-color="#dc18f8"/><stop offset="0.13" stop-color="#7020ff"/><stop offset="0.24" stop-color="#2a1cff"/><stop offset="0.45" stop-color="#2468ff"/><stop offset="0.6" stop-color="#20c8ee"/><stop offset="0.72" stop-color="#70e040"/><stop offset="0.85" stop-color="#f0e030"/><stop offset="1" stop-color="#e02020"/></linearGradient>
<linearGradient id="g22" gradientUnits="userSpaceOnUse" x1="0" y1="545.2" x2="0" y2="420.2" gradientTransform="skewY(-24.54)"><stop offset="0" stop-color="#ea16f6"/><stop offset="0.06" stop-color="#dc18f8"/><stop offset="0.13" stop-color="#7020ff"/><stop offset="0.24" stop-color="#2a1cff"/><stop offset="0.45" stop-color="#2468ff"/><stop offset="0.6" stop-color="#20c8ee"/><stop offset="0.72" stop-color="#70e040"/><stop offset="0.85" stop-color="#f0e030"/><stop offset="1" stop-color="#e02020"/></linearGradient>
<linearGradient id="g23" gradientUnits="userSpaceOnUse" x1="0" y1="549.3" x2="0" y2="424.3" gradientTransform="skewY(-24.54)"><stop offset="0" stop-color="#ea16f6"/><stop offset="0.06" stop-color="#dc18f8"/><stop offset="0.13" stop-color="#7020ff"/><stop offset="0.24" stop-color="#2a1cff"/><stop offset="0.45" stop-color="#2468ff"/><stop offset="0.6" stop-color="#20c8ee"/><stop offset="0.72" stop-color="#70e040"/><stop offset="0.85" stop-color="#f0e030"/><stop offset="1" stop-color="#e02020"/></linearGradient>
<linearGradient id="g24" gradientUnits="userSpaceOnUse" x1="0" y1="553.4" x2="0" y2="428.4" gradientTransform="skewY(-24.54)"><stop offset="0" stop-color="#ea16f6"/><stop offset="0.06" stop-color="#dc18f8"/><stop offset="0.13" stop-color="#7020ff"/><stop offset="0.24" stop-color="#2a1cff"/><stop offset="0.45" stop-color="#2468ff"/><stop offset="0.6" stop-color="#20c8ee"/><stop offset="0.72" stop-color="#70e040"/><stop offset="0.85" stop-color="#f0e030"/><stop offset="1" stop-color="#e02020"/></linearGradient>
<linearGradient id="g25" gradientUnits="userSpaceOnUse" x1="0" y1="557.5" x2="0" y2="432.5" gradientTransform="skewY(-24.54)"><stop offset="0" stop-color="#ea16f6"/><stop offset="0.06" stop-color="#dc18f8"/><stop offset="0.13" stop-color="#7020ff"/><stop offset="0.24" stop-color="#2a1cff"/><stop offset="0.45" stop-color="#2468ff"/><stop offset="0.6" stop-color="#20c8ee"/><stop offset="0.72" stop-color="#70e040"/><stop offset="0.85" stop-color="#f0e030"/><stop offset="1" stop-color="#e02020"/></linearGradient>
<linearGradient id="g26" gradientUnits="userSpaceOnUse" x1="0" y1="561.6" x2="0" y2="436.6" gradientTransform="skewY(-24.54)"><stop offset="0" stop-color="#ea16f6"/><stop offset="0.06" stop-color="#dc18f8"/><stop offset="0.13" stop-color="#7020ff"/><stop offset="0.24" stop-color="#2a1cff"/><stop offset="0.45" stop-color="#2468ff"/><stop offset="0.6" stop-color="#20c8ee"/><stop offset="0.72" stop-color="#70e040"/><stop offset="0.85" stop-color="#f0e030"/><stop offset="1" stop-color="#e02020"/></linearGradient>
<linearGradient id="g27" gradientUnits="userSpaceOnUse" x1="0" y1="565.7" x2="0" y2="440.7" gradientTransform="skewY(-24.54)"><stop offset="0" stop-color="#ea16f6"/><stop offset="0.06" stop-color="#dc18f8"/><stop offset="0.13" stop-color="#7020ff"/><stop offset="0.24" stop-color="#2a1cff"/><stop offset="0.45" stop-color="#2468ff"/><stop offset="0.6" stop-color="#20c8ee"/><stop offset="0.72" stop-color="#70e040"/><stop offset="0.85" stop-color="#f0e030"/><stop offset="1" stop-color="#e02020"/></linearGradient>
<linearGradient id="g28" gradientUnits="userSpaceOnUse" x1="0" y1="569.8" x2="0" y2="444.8" gradientTransform="skewY(-24.54)"><stop offset="0" stop-color="#ea16f6"/><stop offset="0.06" stop-color="#dc18f8"/><stop offset="0.13" stop-color="#7020ff"/><stop offset="0.24" stop-color="#2a1cff"/><stop offset="0.45" stop-color="#2468ff"/><stop offset="0.6" stop-color="#20c8ee"/><stop offset="0.72" stop-color="#70e040"/><stop offset="0.85" stop-color="#f0e030"/><stop offset="1" stop-color="#e02020"/></linearGradient>
<linearGradient id="g29" gradientUnits="userSpaceOnUse" x1="0" y1="573.9" x2="0" y2="448.9" gradientTransform="skewY(-24.54)"><stop offset="0" stop-color="#ea16f6"/><stop offset="0.06" stop-color="#dc18f8"/><stop offset="0.13" stop-color="#7020ff"/><stop offset="0.24" stop-color="#2a1cff"/><stop offset="0.45" stop-color="#2468ff"/><stop offset="0.6" stop-color="#20c8ee"/><stop offset="0.72" stop-color="#70e040"/><stop offset="0.85" stop-color="#f0e030"/><stop offset="1" stop-color="#e02020"/></linearGradient>
<linearGradient id="g30" gradientUnits="userSpaceOnUse" x1="0" y1="578.0" x2="0" y2="453.0" gradientTransform="skewY(-24.54)"><stop offset="0" stop-color="#ea16f6"/><stop offset="0.06" stop-color="#dc18f8"/><stop offset="0.13" stop-color="#7020ff"/><stop offset="0.24" stop-color="#2a1cff"/><stop offset="0.45" stop-color="#2468ff"/><stop offset="0.6" stop-color="#20c8ee"/><stop offset="0.72" stop-color="#70e040"/><stop offset="0.85" stop-color="#f0e030"/><stop offset="1" stop-color="#e02020"/></linearGradient>
<linearGradient id="g31" gradientUnits="userSpaceOnUse" x1="0" y1="582.1" x2="0" y2="457.1" gradientTransform="skewY(-24.54)"><stop offset="0" stop-color="#ea16f6"/><stop offset="0.06" stop-color="#dc18f8"/><stop offset="0.13" stop-color="#7020ff"/><stop offset="0.24" stop-color="#2a1cff"/><stop offset="0.45" stop-color="#2468ff"/><stop offset="0.6" stop-color="#20c8ee"/><stop offset="0.72" stop-color="#70e040"/><stop offset="0.85" stop-color="#f0e030"/><stop offset="1" stop-color="#e02020"/></linearGradient>
<linearGradient id="g32" gradientUnits="userSpaceOnUse" x1="0" y1="586.2" x2="0" y2="461.2" gradientTransform="skewY(-24.54)"><stop offset="0" stop-color="#ea16f6"/><stop offset="0.06" stop-color="#dc18f8"/><stop offset="0.13" stop-color="#7020ff"/><stop offset="0.24" stop-color="#2a1cff"/><stop offset="0.45" stop-color="#2468ff"/><stop offset="0.6" stop-color="#20c8ee"/><stop offset="0.72" stop-color="#70e040"/><stop offset="0.85" stop-color="#f0e030"/><stop offset="1" stop-color="#e02020"/></linearGradient>
<linearGradient id="g33" gradientUnits="userSpaceOnUse" x1="0" y1="590.4" x2="0" y2="465.4" gradientTransform="skewY(-24.54)"><stop offset="0" stop-color="#ea16f6"/><stop offset="0.06" stop-color="#dc18f8"/><stop offset="0.13" stop-color="#7020ff"/><stop offset="0.24" stop-color="#2a1cff"/><stop offset="0.45" stop-color="#2468ff"/><stop offset="0.6" stop-color="#20c8ee"/><stop offset="0.72" stop-color="#70e040"/><stop offset="0.85" stop-color="#f0e030"/><stop offset="1" stop-color="#e02020"/></linearGradient>
<linearGradient id="g34" gradientUnits="userSpaceOnUse" x1="0" y1="594.5" x2="0" y2="469.5" gradientTransform="skewY(-24.54)"><stop offset="0" stop-color="#ea16f6"/><stop offset="0.06" stop-color="#dc18f8"/><stop offset="0.13" stop-color="#7020ff"/><stop offset="0.24" stop-color="#2a1cff"/><stop offset="0.45" stop-color="#2468ff"/><stop offset="0.6" stop-color="#20c8ee"/><stop offset="0.72" stop-color="#70e040"/><stop offset="0.85" stop-color="#f0e030"/><stop offset="1" stop-color="#e02020"/></linearGradient>
<linearGradient id="g35" gradientUnits="userSpaceOnUse" x1="0" y1="598.6" x2="0" y2="473.6" gradientTransform="skewY(-24.54)"><stop offset="0" stop-color="#ea16f6"/><stop offset="0.06" stop-color="#dc18f8"/><stop offset="0.13" stop-color="#7020ff"/><stop offset="0.24" stop-color="#2a1cff"/><stop offset="0.45" stop-color="#2468ff"/><stop offset="0.6" stop-color="#20c8ee"/><stop offset="0.72" stop-color="#70e040"/><stop offset="0.85" stop-color="#f0e030"/><stop offset="1" stop-color="#e02020"/></linearGradient>
</defs>
<path d="M273.5,330.0L474.0,382.1L479.2,379.7L278.8,327.6Z" fill="#de18ee"/>
<path d="M273.5,330.0L273.5,327.1L274.7,325.6L275.8,327.2L277.0,325.4L278.1,323.4L279.3,324.4L280.4,321.2L281.6,322.3L282.7,319.9L283.9,322.3L285.0,317.8L286.2,319.8L287.3,320.9L288.5,321.1L289.7,318.8L290.8,317.8L292.0,315.6L293.1,314.2L294.3,315.6L295.4,313.5L296.6,314.5L297.7,315.4L298.9,314.7L300.0,313.8L301.2,314.5L302.3,309.3L303.5,309.4L304.7,310.7L305.8,306.4L307.0,309.6L308.1,308.6L309.3,308.1L310.4,309.2L311.6,306.5L312.7,306.4L313.9,306.6L315.0,306.7L316.2,305.8L317.3,305.6L318.5,307.2L319.7,304.2L320.8,303.6L322.0,302.6L323.1,301.7L324.3,301.8L325.4,300.6L326.6,300.1L327.7,300.1L328.9,299.8L330.0,301.0L331.2,300.3L332.3,298.7L333.5,297.2L334.7,299.6L335.8,297.2L337.0,295.5L338.1,295.9L339.3,296.3L340.4,294.4L341.6,293.9L342.7,294.1L343.9,292.6L345.0,291.4L346.2,291.5L347.3,291.4L348.5,292.6L349.7,291.8L350.8,289.9L352.0,288.4L353.1,288.5L354.3,289.8L355.4,287.4L356.6,288.0L357.7,286.4L358.9,285.9L360.0,284.9L361.2,287.1L362.3,284.4L363.5,285.0L364.7,285.4L365.8,285.6L367.0,282.5L368.1,282.1L369.3,283.0L370.4,282.7L371.6,282.2L372.7,280.9L373.9,276.9L375.0,279.6L376.2,275.9L377.3,276.9L378.5,279.6L379.7,279.7L380.8,279.3L382.0,278.0L383.1,274.8L384.3,275.5L385.4,274.5L386.6,274.7L387.7,274.9L388.9,274.2L390.0,273.3L391.2,270.9L392.3,274.2L393.5,273.6L394.7,271.1L395.8,268.7L397.0,271.9L398.1,268.5L399.3,267.4L400.4,270.1L401.6,269.3L402.7,267.5L403.9,268.0L405.0,267.1L406.2,267.0L407.3,267.5L408.5,263.8L409.7,264.9L410.8,265.3L412.0,264.5L413.1,264.3L414.3,262.3L415.4,261.5L416.6,261.6L417.7,258.5L418.9,260.6L420.0,260.6L421.2,260.2L422.3,259.9L423.5,258.3L423.5,261.5Z" fill="url(#g0)"/>
<path d="M296.6,318.5L296.6,288.5M310.4,312.1L310.4,298.9" stroke="url(#g0)" stroke-width="1.2"/>
<path d="M279.2,331.5L279.2,329.6L280.4,327.8L281.5,326.8L282.7,328.0L283.8,326.7L285.0,327.0L286.2,323.9L287.3,324.3L288.5,323.8L289.6,324.4L290.8,322.5L291.9,321.9L293.1,320.5L294.2,321.3L295.4,319.0L296.5,319.4L297.7,321.2L298.8,318.7L300.0,318.7L301.2,316.9L302.3,318.4L303.5,315.5L304.6,314.4L305.8,313.3L306.9,315.8L308.1,312.3L309.2,313.3L310.4,312.0L311.5,311.5L312.7,313.0L313.8,308.4L315.0,310.2L316.2,310.0L317.3,308.9L318.5,309.7L319.6,310.1L320.8,309.8L321.9,306.5L323.1,308.2L324.2,306.4L325.4,304.8L326.5,305.7L327.7,304.4L328.8,304.2L330.0,301.4L331.2,302.1L332.3,302.7L333.5,302.3L334.6,300.0L335.8,298.2L336.9,298.8L338.1,297.3L339.2,299.0L340.4,298.9L341.5,299.8L342.7,298.5L343.8,299.3L345.0,293.5L346.2,296.7L347.3,295.8L348.5,295.3L349.6,295.1L350.8,293.5L351.9,295.0L353.1,293.3L354.2,293.5L355.4,292.9L356.5,292.0L357.7,289.7L358.8,288.7L360.0,287.7L361.2,291.7L362.3,289.0L363.5,286.9L364.6,287.3L365.8,285.7L366.9,283.2L368.1,286.3L369.2,285.9L370.4,285.6L371.5,285.1L372.7,285.1L373.8,286.2L375.0,283.7L376.2,283.3L377.3,284.2L378.5,283.9L379.6,282.3L380.8,282.4L381.9,279.5L383.1,281.5L384.2,280.4L385.4,278.1L386.5,278.8L387.7,278.9L388.8,279.6L390.0,276.4L391.2,277.4L392.3,273.7L393.5,275.4L394.6,276.2L395.8,276.2L396.9,276.0L398.1,274.8L399.2,272.6L400.4,272.6L401.5,271.4L402.7,273.1L403.8,269.8L405.0,270.6L406.2,271.3L407.3,270.2L408.5,269.7L409.6,267.4L410.8,270.1L411.9,268.3L413.1,268.9L414.2,267.5L415.4,267.2L416.5,265.1L417.7,265.1L418.8,263.9L420.0,262.2L421.2,264.0L422.3,264.1L423.5,264.0L424.6,261.1L425.8,263.0L426.9,260.2L428.1,260.2L429.2,259.5L429.2,263.0Z" fill="url(#g1)"/>
<path d="M298.8,321.5L298.8,312.7M300.0,321.0L300.0,316.4M305.8,318.4L305.8,285.0M306.9,317.8L306.9,291.6M308.1,317.3L308.1,312.9M310.4,316.3L310.4,312.2M311.5,315.7L311.5,296.3M316.2,313.6L316.2,280.2M318.5,312.6L318.5,302.7M323.1,310.5L323.1,303.7M326.5,308.9L326.5,290.2M327.7,308.4L327.7,297.4M339.2,303.1L339.2,289.3" stroke="url(#g1)" stroke-width="1.2"/>
<path d="M285.0,333.0L285.0,329.3L286.1,330.0L287.3,328.0L288.4,327.5L289.6,325.6L290.7,326.7L291.9,327.8L293.0,327.7L294.2,326.5L295.3,324.5L296.5,324.5L297.6,323.4L298.8,324.4L300.0,322.2L301.1,321.7L302.3,322.1L303.4,321.2L304.6,319.4L305.7,320.4L306.9,317.4L308.0,318.2L309.2,318.9L310.3,318.1L311.5,314.3L312.6,317.7L313.8,315.4L315.0,316.6L316.1,316.7L317.3,313.3L318.4,313.3L319.6,312.0L320.7,314.8L321.9,312.6L323.0,311.1L324.2,309.4L325.3,310.8L326.5,308.9L327.6,309.8L328.8,308.7L330.0,306.6L331.1,308.6L332.3,305.6L333.4,308.7L334.6,307.7L335.7,304.2L336.9,304.6L338.0,303.4L339.2,303.0L340.3,303.6L341.5,302.6L342.6,302.1L343.8,304.4L345.0,302.1L346.1,299.0L347.3,300.6L348.4,300.2L349.6,299.1L350.7,299.7L351.9,297.0L353.0,299.5L354.2,299.7L355.3,296.9L356.5,296.6L357.6,294.1L358.8,290.8L360.0,296.9L361.1,295.3L362.3,294.0L363.4,292.9L364.6,293.0L365.7,292.4L366.9,290.4L368.0,289.0L369.2,289.1L370.3,288.8L371.5,289.3L372.6,289.3L373.8,288.6L375.0,289.2L376.1,289.7L377.3,288.8L378.4,286.4L379.6,283.9L380.7,287.6L381.9,284.7L383.0,282.7L384.2,284.4L385.3,283.1L386.5,283.2L387.6,284.2L388.8,282.4L390.0,281.3L391.1,280.5L392.3,279.4L393.4,279.7L394.6,281.0L395.7,278.7L396.9,280.2L398.0,277.8L399.2,277.2L400.3,278.7L401.5,276.7L402.6,275.5L403.8,276.2L405.0,276.3L406.1,274.2L407.3,274.5L408.4,274.1L409.6,273.7L410.7,273.1L411.9,272.8L413.0,272.7L414.2,270.4L415.3,270.2L416.5,268.6L417.6,270.2L418.8,268.3L420.0,266.5L421.1,265.4L422.3,266.9L423.4,267.4L424.6,267.6L425.7,266.2L426.9,265.8L428.0,265.7L429.2,264.2L430.3,265.2L431.5,264.1L432.6,262.9L433.8,262.9L435.0,262.8L435.0,264.5Z" fill="url(#g2)"/>
<path d="M303.4,323.5L303.4,305.7M308.0,321.4L308.0,312.1M313.8,318.8L313.8,313.6M317.3,317.2L317.3,302.5M318.4,316.7L318.4,298.0M319.6,316.2L319.6,285.1M325.3,313.5L325.3,309.0M330.0,311.4L330.0,267.5M339.2,307.2L339.2,266.4" stroke="url(#g2)" stroke-width="1.2"/>
<path d="M290.7,334.5L290.7,331.9L291.8,329.6L293.0,331.5L294.1,328.4L295.3,329.5L296.5,328.0L297.6,327.8L298.8,327.6L299.9,325.8L301.1,325.3L302.2,325.0L303.4,325.8L304.5,326.0L305.7,323.3L306.8,323.0L308.0,322.9L309.1,321.2L310.3,323.6L311.5,319.7L312.6,322.3L313.8,319.4L314.9,320.2L316.1,317.1L317.2,317.3L318.4,318.0L319.5,315.5L320.7,314.8L321.8,315.9L323.0,316.5L324.1,314.8L325.3,314.9L326.5,313.1L327.6,312.6L328.8,311.6L329.9,312.8L331.1,310.4L332.2,310.7L333.4,309.6L334.5,309.6L335.7,308.7L336.8,310.0L338.0,306.7L339.1,306.5L340.3,306.6L341.5,305.0L342.6,306.6L343.8,308.0L344.9,305.1L346.1,305.6L347.2,305.4L348.4,305.5L349.5,303.1L350.7,303.8L351.8,302.0L353.0,300.2L354.1,298.0L355.3,299.0L356.5,301.8L357.6,295.9L358.8,300.4L359.9,299.4L361.1,297.5L362.2,296.4L363.4,297.2L364.5,298.2L365.7,295.8L366.8,296.0L368.0,294.7L369.1,294.6L370.3,291.5L371.5,293.9L372.6,290.6L373.8,290.7L374.9,291.9L376.1,292.1L377.2,288.5L378.4,288.9L379.5,290.5L380.7,289.6L381.8,290.2L383.0,289.5L384.1,287.4L385.3,286.2L386.5,289.1L387.6,286.8L388.8,285.3L389.9,285.9L391.1,285.5L392.2,285.4L393.4,284.0L394.5,283.4L395.7,281.7L396.8,283.1L398.0,282.0L399.1,281.9L400.3,280.4L401.5,280.4L402.6,281.4L403.8,281.3L404.9,279.9L406.1,279.2L407.2,277.5L408.4,275.1L409.5,278.1L410.7,274.2L411.8,276.2L413.0,276.6L414.1,275.1L415.3,274.6L416.5,275.4L417.6,272.7L418.8,272.1L419.9,272.9L421.1,269.5L422.2,271.1L423.4,270.7L424.5,268.9L425.7,269.5L426.8,267.1L428.0,268.1L429.1,268.4L430.3,267.5L431.5,266.6L432.6,266.0L433.8,266.1L434.9,266.6L436.1,265.7L437.2,264.5L438.4,264.9L439.5,263.4L440.7,264.6L440.7,266.0Z" fill="url(#g3)"/>
<path d="M309.1,325.0L309.1,318.7M310.3,324.5L310.3,313.8M311.5,324.0L311.5,294.9M314.9,322.4L314.9,305.6M316.1,321.9L316.1,302.7M318.4,320.8L318.4,298.1M319.5,320.3L319.5,315.0M320.7,319.8L320.7,310.1M321.8,319.2L321.8,306.9M323.0,318.7L323.0,308.7M324.1,318.2L324.1,300.6M325.3,317.7L325.3,297.8M326.5,317.1L326.5,298.7M327.6,316.6L327.6,293.1M334.5,313.4L334.5,281.9M338.0,311.9L338.0,296.7M342.6,309.8L342.6,268.0M354.1,304.5L354.1,295.2" stroke="url(#g3)" stroke-width="1.2"/>
<path d="M296.4,336.0L296.4,330.1L297.6,331.6L298.7,331.8L299.9,330.1L301.0,329.3L302.2,330.5L303.3,330.1L304.5,329.6L305.6,327.9L306.8,327.3L308.0,327.0L309.1,326.6L310.3,327.9L311.4,323.8L312.6,325.5L313.7,323.4L314.9,321.9L316.0,324.3L317.2,323.1L318.3,322.1L319.5,317.6L320.6,320.5L321.8,321.8L323.0,321.0L324.1,321.0L325.3,318.0L326.4,320.0L327.6,318.6L328.7,318.1L329.9,315.1L331.0,312.6L332.2,316.4L333.3,315.0L334.5,315.6L335.6,314.4L336.8,312.8L338.0,312.3L339.1,312.9L340.3,310.8L341.4,310.5L342.6,311.9L343.7,310.1L344.9,310.5L346.0,309.4L347.2,308.1L348.3,308.6L349.5,308.3L350.6,307.8L351.8,306.9L353.0,308.2L354.1,304.5L355.3,305.9L356.4,302.5L357.6,302.7L358.7,303.3L359.9,303.2L361.0,301.6L362.2,302.8L363.3,303.5L364.5,301.1L365.6,297.5L366.8,299.2L368.0,300.4L369.1,297.2L370.3,297.1L371.4,296.8L372.6,295.2L373.7,295.9L374.9,296.2L376.0,295.1L377.2,295.9L378.3,293.9L379.5,294.2L380.6,292.8L381.8,294.5L383.0,291.7L384.1,292.3L385.3,291.5L386.4,290.9L387.6,289.0L388.7,288.6L389.9,289.3L391.0,288.3L392.2,288.4L393.3,287.1L394.5,288.3L395.6,288.7L396.8,285.8L398.0,286.3L399.1,286.4L400.3,285.6L401.4,285.9L402.6,283.0L403.7,284.6L404.9,282.2L406.0,282.0L407.2,281.4L408.3,283.2L409.5,281.8L410.6,280.9L411.8,280.6L413.0,280.5L414.1,278.4L415.3,279.8L416.4,277.9L417.6,276.8L418.7,276.7L419.9,276.4L421.0,272.5L422.2,274.1L423.3,276.2L424.5,274.0L425.6,272.5L426.8,273.6L428.0,272.6L429.1,271.8L430.3,270.4L431.4,271.4L432.6,270.8L433.7,269.6L434.9,269.5L436.0,269.6L437.2,265.6L438.3,268.3L439.5,267.5L440.6,268.4L441.8,266.2L443.0,267.7L444.1,264.3L445.3,265.2L446.4,264.5L446.4,267.5Z" fill="url(#g4)"/>
<path d="M318.3,324.9L318.3,284.4M319.5,324.4L319.5,316.9M321.8,323.4L321.8,303.1M324.1,322.3L324.1,279.2M326.4,321.3L326.4,309.4M327.6,320.7L327.6,311.5M328.7,320.2L328.7,311.0M333.3,318.1L333.3,313.9M343.7,313.4L343.7,289.7" stroke="url(#g4)" stroke-width="1.2"/>
<path d="M302.1,337.4L302.1,333.6L303.3,333.4L304.5,333.1L305.6,333.1L306.8,331.3L307.9,332.7L309.1,331.2L310.2,330.3L311.4,331.3L312.5,331.3L313.7,328.4L314.8,329.2L316.0,326.5L317.1,324.4L318.3,325.8L319.5,325.6L320.6,326.6L321.8,324.2L322.9,324.1L324.1,323.2L325.2,322.2L326.4,322.3L327.5,322.8L328.7,322.6L329.8,320.8L331.0,318.9L332.1,319.7L333.3,321.1L334.5,316.7L335.6,317.6L336.8,318.1L337.9,316.6L339.1,315.7L340.2,317.1L341.4,316.6L342.5,314.1L343.7,314.4L344.8,313.4L346.0,314.1L347.1,313.0L348.3,312.0L349.5,311.2L350.6,311.7L351.8,312.1L352.9,309.9L354.1,306.1L355.2,309.7L356.4,309.2L357.5,310.1L358.7,308.2L359.8,306.3L361.0,306.2L362.1,306.8L363.3,307.3L364.5,304.4L365.6,304.4L366.8,302.3L367.9,304.0L369.1,303.8L370.2,302.4L371.4,303.5L372.5,301.3L373.7,299.5L374.8,301.0L376.0,296.8L377.1,298.3L378.3,299.9L379.5,297.1L380.6,297.2L381.8,298.4L382.9,295.2L384.1,295.8L385.2,294.4L386.4,295.1L387.5,293.9L388.7,295.6L389.8,292.1L391.0,291.5L392.1,293.9L393.3,291.7L394.5,291.0L395.6,289.9L396.8,290.1L397.9,288.0L399.1,289.8L400.2,287.5L401.4,288.8L402.5,288.9L403.7,288.1L404.8,286.5L406.0,287.6L407.1,284.9L408.3,285.6L409.5,283.6L410.6,285.6L411.8,285.0L412.9,283.4L414.1,282.2L415.2,282.6L416.4,283.2L417.5,282.7L418.7,281.4L419.8,280.2L421.0,281.0L422.1,277.3L423.3,279.3L424.5,278.3L425.6,278.6L426.8,278.8L427.9,278.2L429.1,273.7L430.2,274.0L431.4,275.3L432.5,273.7L433.7,272.9L434.8,274.4L436.0,270.8L437.1,272.4L438.3,271.4L439.5,272.1L440.6,269.9L441.8,271.5L442.9,270.2L444.1,270.5L445.2,269.9L446.4,269.0L447.5,268.9L448.7,266.7L449.8,267.6L451.0,267.8L452.1,266.0L452.1,268.9Z" fill="url(#g5)"/>
<path d="M324.1,326.4L324.1,313.7M332.1,322.7L332.1,311.5M333.3,322.2L333.3,299.7M343.7,317.5L343.7,313.2M344.8,316.9L344.8,285.3M347.1,315.9L347.1,302.2" stroke="url(#g5)" stroke-width="1.2"/>
<path d="M307.9,338.9L307.9,334.3L309.0,334.6L310.2,334.5L311.3,333.8L312.5,334.8L313.6,334.7L314.8,330.7L315.9,332.5L317.1,331.9L318.3,332.0L319.4,329.8L320.6,329.4L321.7,326.3L322.9,327.6L324.0,328.3L325.2,328.0L326.3,326.1L327.5,327.6L328.6,326.5L329.8,321.3L330.9,324.9L332.1,322.1L333.3,322.5L334.4,324.0L335.6,322.3L336.7,320.8L337.9,321.8L339.0,321.7L340.2,320.6L341.3,319.3L342.5,320.0L343.6,319.3L344.8,315.4L345.9,316.6L347.1,319.2L348.3,317.6L349.4,314.6L350.6,316.7L351.7,314.7L352.9,313.4L354.0,313.7L355.2,313.7L356.3,312.8L357.5,312.2L358.6,313.2L359.8,310.4L360.9,311.0L362.1,310.3L363.3,310.6L364.4,309.8L365.6,306.9L366.7,308.9L367.9,306.8L369.0,308.0L370.2,306.7L371.3,305.6L372.5,301.3L373.6,305.9L374.8,303.5L375.9,301.1L377.1,303.4L378.3,301.6L379.4,302.0L380.6,302.7L381.7,302.0L382.9,301.1L384.0,298.8L385.2,298.7L386.3,297.2L387.5,299.1L388.6,297.0L389.8,297.9L390.9,298.1L392.1,295.3L393.3,296.8L394.4,296.0L395.6,293.9L396.7,292.5L397.9,294.2L399.0,294.2L400.2,292.1L401.3,291.7L402.5,291.3L403.6,293.1L404.8,290.8L405.9,288.0L407.1,290.6L408.3,288.6L409.4,290.4L410.6,287.5L411.7,288.5L412.9,289.2L414.0,288.2L415.2,286.6L416.3,286.1L417.5,284.7L418.6,286.3L419.8,283.1L420.9,284.6L422.1,283.0L423.3,284.5L424.4,284.2L425.6,282.8L426.7,280.8L427.9,280.4L429.0,281.6L430.2,280.0L431.3,280.1L432.5,278.6L433.6,279.5L434.8,279.1L435.9,274.9L437.1,278.6L438.3,276.4L439.4,276.7L440.6,276.6L441.7,276.2L442.9,274.5L444.0,273.3L445.2,273.1L446.3,270.1L447.5,272.2L448.6,273.2L449.8,272.1L450.9,270.1L452.1,271.7L453.3,270.5L454.4,269.7L455.6,270.0L456.7,268.4L457.9,267.3L457.9,270.4Z" fill="url(#g6)"/>
<path d="M329.8,327.9L329.8,311.5M333.3,326.3L333.3,284.6M334.4,325.8L334.4,313.4M336.7,324.8L336.7,301.3M337.9,324.2L337.9,300.7M341.3,322.7L341.3,317.8M344.8,321.1L344.8,297.1M350.6,318.4L350.6,291.2M354.0,316.9L354.0,309.5" stroke="url(#g6)" stroke-width="1.2"/>
<path d="M313.6,340.4L313.6,338.0L314.8,337.4L315.9,337.7L317.1,336.0L318.2,335.0L319.4,334.1L320.5,330.6L321.7,332.6L322.8,333.9L324.0,332.9L325.1,331.5L326.3,329.5L327.4,331.3L328.6,331.4L329.8,328.7L330.9,326.0L332.1,328.5L333.2,329.7L334.4,327.4L335.5,328.4L336.7,326.6L337.8,324.1L339.0,326.0L340.1,325.9L341.3,323.7L342.4,321.3L343.6,323.9L344.8,321.9L345.9,321.0L347.1,322.1L348.2,318.3L349.4,320.4L350.5,319.5L351.7,316.2L352.8,317.5L354.0,319.2L355.1,314.7L356.3,318.6L357.4,316.6L358.6,315.5L359.8,311.6L360.9,314.4L362.1,314.7L363.2,313.6L364.4,312.5L365.5,312.4L366.7,313.3L367.8,311.7L369.0,312.2L370.1,309.6L371.3,310.5L372.4,310.0L373.6,308.5L374.8,308.8L375.9,309.9L377.1,307.6L378.2,307.2L379.4,307.6L380.5,305.9L381.7,306.9L382.8,305.1L384.0,304.9L385.1,302.7L386.3,302.6L387.4,303.6L388.6,302.8L389.8,302.6L390.9,302.1L392.1,299.9L393.2,301.5L394.4,300.0L395.5,298.3L396.7,300.3L397.8,296.1L399.0,297.2L400.1,298.7L401.3,295.0L402.4,295.9L403.6,294.2L404.8,293.3L405.9,295.2L407.1,294.4L408.2,291.9L409.4,292.6L410.5,293.9L411.7,293.0L412.8,291.6L414.0,289.8L415.1,291.9L416.3,289.2L417.4,288.2L418.6,288.9L419.8,289.8L420.9,287.7L422.1,288.4L423.2,287.1L424.4,286.1L425.5,285.6L426.7,286.9L427.8,284.6L429.0,284.1L430.1,284.9L431.3,283.8L432.4,282.6L433.6,281.8L434.8,281.2L435.9,282.9L437.1,280.7L438.2,280.9L439.4,278.6L440.5,278.7L441.7,280.2L442.8,279.6L444.0,277.1L445.1,278.0L446.3,277.1L447.4,274.2L448.6,275.6L449.8,274.4L450.9,274.3L452.1,274.0L453.2,274.6L454.4,272.2L455.5,272.3L456.7,272.9L457.8,271.6L459.0,270.7L460.1,269.9L461.3,269.1L462.4,269.4L463.6,266.2L463.6,271.9Z" fill="url(#g7)"/>
<path d="M336.7,328.9L336.7,303.8M339.0,327.8L339.0,313.8M340.1,327.3L340.1,303.8M342.4,326.2L342.4,313.0M351.7,322.0L351.7,297.8M354.0,321.0L354.0,297.8M371.3,313.1L371.3,273.4" stroke="url(#g7)" stroke-width="1.2"/>
<path d="M319.3,341.9L319.3,338.3L320.5,338.4L321.6,337.9L322.8,336.9L323.9,336.7L325.1,335.8L326.3,335.4L327.4,335.1L328.6,333.9L329.7,332.8L330.9,334.2L332.0,332.6L333.2,330.7L334.3,331.8L335.5,330.9L336.6,331.8L337.8,330.1L338.9,329.5L340.1,330.9L341.3,327.6L342.4,326.2L343.6,327.6L344.7,326.3L345.9,326.0L347.0,325.0L348.2,325.6L349.3,323.2L350.5,324.5L351.6,323.4L352.8,319.3L353.9,320.8L355.1,321.0L356.3,322.0L357.4,320.6L358.6,322.6L359.7,320.3L360.9,318.7L362.0,320.0L363.2,319.6L364.3,315.0L365.5,316.1L366.6,315.8L367.8,312.3L368.9,315.9L370.1,314.7L371.3,315.2L372.4,315.2L373.6,312.3L374.7,312.1L375.9,310.8L377.0,311.9L378.2,312.0L379.3,310.5L380.5,309.9L381.6,310.4L382.8,309.1L383.9,309.4L385.1,308.5L386.3,308.6L387.4,305.5L388.6,304.2L389.7,307.2L390.9,306.5L392.0,304.6L393.2,304.4L394.3,304.0L395.5,303.8L396.6,304.3L397.8,302.4L398.9,302.4L400.1,303.0L401.3,299.6L402.4,299.9L403.6,297.4L404.7,300.8L405.9,298.3L407.0,298.1L408.2,298.5L409.3,296.5L410.5,293.2L411.6,295.7L412.8,295.0L413.9,294.6L415.1,293.8L416.3,294.1L417.4,292.6L418.6,289.7L419.7,292.0L420.9,291.2L422.0,292.8L423.2,292.6L424.3,289.5L425.5,291.4L426.6,290.8L427.8,291.0L428.9,286.9L430.1,286.0L431.3,288.1L432.4,286.9L433.6,287.1L434.7,286.9L435.9,285.3L437.0,285.3L438.2,284.3L439.3,283.6L440.5,284.4L441.6,283.6L442.8,283.3L443.9,279.0L445.1,281.5L446.3,282.0L447.4,281.3L448.6,279.3L449.7,278.3L450.9,277.9L452.0,278.5L453.2,279.4L454.3,278.7L455.5,277.9L456.6,276.6L457.8,276.7L458.9,276.2L460.1,273.9L461.3,274.6L462.4,274.3L463.6,272.2L464.7,273.6L465.9,273.0L467.0,271.6L468.2,271.9L469.3,270.9L469.3,273.4Z" fill="url(#g8)"/>
<path d="M340.1,331.4L340.1,308.3M343.6,329.8L343.6,295.2M345.9,328.8L345.9,319.3M351.6,326.2L351.6,319.6M353.9,325.1L353.9,307.4M355.1,324.6L355.1,307.4M367.8,318.8L367.8,312.0M368.9,318.3L368.9,277.2M385.1,310.9L385.1,286.0" stroke="url(#g8)" stroke-width="1.2"/>
<path d="M325.1,343.4L325.1,341.2L326.2,340.5L327.4,340.4L328.5,339.9L329.7,337.9L330.8,337.0L332.0,336.7L333.1,336.1L334.3,335.6L335.4,336.1L336.6,333.4L337.7,334.2L338.9,334.3L340.1,334.7L341.2,333.0L342.4,333.1L343.5,330.6L344.7,330.7L345.8,330.7L347.0,331.2L348.1,329.3L349.3,327.5L350.4,329.2L351.6,327.7L352.7,326.7L353.9,328.1L355.1,326.1L356.2,322.5L357.4,326.2L358.5,325.7L359.7,324.5L360.8,323.8L362.0,322.7L363.1,319.8L364.3,322.9L365.4,322.8L366.6,320.9L367.7,319.6L368.9,319.7L370.1,316.3L371.2,319.3L372.4,318.4L373.5,316.9L374.7,318.2L375.8,315.8L377.0,314.1L378.1,316.1L379.3,315.3L380.4,312.8L381.6,313.5L382.7,311.8L383.9,311.0L385.1,311.7L386.2,312.8L387.4,311.6L388.5,310.8L389.7,309.6L390.8,310.5L392.0,310.8L393.1,307.8L394.3,309.8L395.4,306.8L396.6,305.5L397.7,306.8L398.9,306.0L400.1,305.9L401.2,304.6L402.4,303.7L403.5,304.6L404.7,303.2L405.8,303.1L407.0,302.3L408.1,302.1L409.3,301.2L410.4,300.0L411.6,299.3L412.7,299.3L413.9,297.6L415.1,298.1L416.2,298.3L417.4,298.7L418.5,297.3L419.7,297.1L420.8,294.0L422.0,293.1L423.1,296.2L424.3,294.5L425.4,293.6L426.6,294.4L427.7,292.6L428.9,294.0L430.1,293.4L431.2,291.5L432.4,291.5L433.5,289.9L434.7,289.4L435.8,289.7L437.0,289.4L438.1,290.1L439.3,289.2L440.4,288.1L441.6,287.2L442.7,286.2L443.9,284.7L445.1,285.4L446.2,284.9L447.4,285.5L448.5,284.7L449.7,283.6L450.8,284.4L452.0,282.8L453.1,283.0L454.3,281.7L455.4,280.6L456.6,280.6L457.7,281.5L458.9,278.9L460.1,279.9L461.2,279.0L462.4,279.0L463.5,277.2L464.7,276.7L465.8,277.7L467.0,275.7L468.1,273.3L469.3,274.2L470.4,275.6L471.6,272.7L472.7,272.9L473.9,272.5L475.1,270.7L475.1,274.9Z" fill="url(#g9)"/>
<path d="M370.1,321.8L370.1,279.3" stroke="url(#g9)" stroke-width="1.2"/>
<path d="M330.8,344.9L330.8,341.6L331.9,342.4L333.1,341.7L334.2,340.6L335.4,339.3L336.6,337.3L337.7,339.6L338.9,337.6L340.0,337.9L341.2,337.3L342.3,337.1L343.5,334.7L344.6,337.1L345.8,334.4L346.9,331.8L348.1,332.5L349.2,330.8L350.4,331.5L351.6,331.9L352.7,332.6L353.9,330.8L355.0,330.2L356.2,331.1L357.3,329.3L358.5,328.3L359.6,329.5L360.8,328.5L361.9,326.6L363.1,327.4L364.2,325.5L365.4,325.0L366.6,325.9L367.7,323.2L368.9,323.3L370.0,322.3L371.2,319.4L372.3,323.5L373.5,321.3L374.6,321.2L375.8,321.7L376.9,320.8L378.1,319.1L379.2,318.9L380.4,318.1L381.6,319.3L382.7,318.5L383.9,317.0L385.0,316.3L386.2,316.4L387.3,316.1L388.5,315.0L389.6,314.4L390.8,314.4L391.9,313.8L393.1,313.2L394.2,311.6L395.4,312.1L396.6,310.7L397.7,312.4L398.9,311.6L400.0,311.2L401.2,309.9L402.3,305.5L403.5,307.5L404.6,309.3L405.8,307.0L406.9,304.9L408.1,305.2L409.2,304.1L410.4,304.1L411.6,304.1L412.7,302.7L413.9,301.7L415.0,302.1L416.2,301.8L417.3,300.9L418.5,301.2L419.6,301.3L420.8,300.4L421.9,297.1L423.1,300.2L424.2,297.9L425.4,298.8L426.6,299.0L427.7,297.0L428.9,295.8L430.0,297.0L431.2,295.1L432.3,294.1L433.5,293.9L434.6,294.1L435.8,293.6L436.9,293.1L438.1,289.2L439.2,293.8L440.4,290.8L441.6,291.4L442.7,292.3L443.9,289.9L445.0,289.7L446.2,288.5L447.3,286.9L448.5,287.6L449.6,288.9L450.8,288.7L451.9,286.7L453.1,284.6L454.2,285.6L455.4,286.1L456.6,284.4L457.7,283.6L458.9,283.6L460.0,282.2L461.2,280.4L462.3,281.2L463.5,281.1L464.6,280.5L465.8,281.2L466.9,281.1L468.1,279.6L469.2,280.2L470.4,279.8L471.6,276.8L472.7,277.8L473.9,275.0L475.0,276.1L476.2,277.1L477.3,272.1L478.5,275.7L479.6,273.5L480.8,273.5L480.8,276.4Z" fill="url(#g10)"/>
<path d="M353.9,333.3L353.9,313.9M359.6,330.7L359.6,299.5M394.2,314.9L394.2,290.3" stroke="url(#g10)" stroke-width="1.2"/>
<path d="M336.5,346.4L336.5,343.0L337.7,344.5L338.8,340.7L340.0,341.8L341.1,337.9L342.3,340.2L343.4,339.6L344.6,340.1L345.7,339.1L346.9,338.8L348.1,338.9L349.2,338.5L350.4,336.4L351.5,337.5L352.7,336.8L353.8,334.4L355.0,333.7L356.1,331.9L357.3,332.6L358.4,334.3L359.6,333.4L360.7,331.7L361.9,328.3L363.1,330.2L364.2,331.3L365.4,330.3L366.5,328.3L367.7,329.0L368.8,328.6L370.0,329.0L371.1,326.8L372.3,326.6L373.4,325.8L374.6,324.8L375.7,325.4L376.9,326.0L378.1,323.8L379.2,323.0L380.4,322.7L381.5,322.9L382.7,321.9L383.8,321.1L385.0,322.2L386.1,320.5L387.3,320.1L388.4,317.9L389.6,319.3L390.7,318.2L391.9,316.6L393.1,317.2L394.2,316.0L395.4,317.1L396.5,316.3L397.7,314.3L398.8,313.1L400.0,314.5L401.1,311.8L402.3,311.1L403.4,312.8L404.6,313.3L405.7,312.2L406.9,310.3L408.1,310.1L409.2,310.0L410.4,306.8L411.5,305.9L412.7,307.8L413.8,306.8L415.0,306.1L416.1,306.2L417.3,306.8L418.4,304.8L419.6,306.1L420.7,304.6L421.9,304.2L423.1,304.1L424.2,302.3L425.4,302.6L426.5,300.5L427.7,302.7L428.8,301.8L430.0,301.0L431.1,300.4L432.3,299.2L433.4,296.6L434.6,299.2L435.7,298.7L436.9,297.2L438.1,298.5L439.2,295.2L440.4,295.0L441.5,295.5L442.7,295.6L443.8,294.4L445.0,293.0L446.1,294.1L447.3,293.6L448.4,293.5L449.6,293.2L450.7,291.4L451.9,289.9L453.1,290.6L454.2,290.0L455.4,288.5L456.5,289.7L457.7,286.5L458.8,287.1L460.0,288.0L461.1,285.8L462.3,287.6L463.4,286.6L464.6,283.5L465.7,284.9L466.9,283.2L468.1,284.8L469.2,284.4L470.4,281.6L471.5,281.0L472.7,279.9L473.8,279.7L475.0,280.3L476.1,279.7L477.3,280.7L478.4,280.2L479.6,278.7L480.7,278.0L481.9,276.2L483.1,275.4L484.2,276.7L485.4,274.7L486.5,274.7L486.5,277.9Z" fill="url(#g11)"/>
<path d="M394.2,319.0L394.2,290.8" stroke="url(#g11)" stroke-width="1.2"/>
<path d="M342.2,347.9L342.2,345.9L343.4,343.6L344.6,345.1L345.7,342.3L346.9,343.1L348.0,343.6L349.2,341.1L350.3,342.1L351.5,340.5L352.6,339.3L353.8,338.6L354.9,339.3L356.1,338.9L357.2,339.4L358.4,336.9L359.6,334.3L360.7,336.0L361.9,335.2L363.0,336.2L364.2,335.5L365.3,335.5L366.5,332.9L367.6,334.5L368.8,331.6L369.9,332.8L371.1,332.0L372.2,332.1L373.4,330.7L374.6,327.2L375.7,329.1L376.9,325.4L378.0,327.6L379.2,325.7L380.3,327.9L381.5,327.7L382.6,327.4L383.8,325.1L384.9,324.8L386.1,324.2L387.2,324.1L388.4,323.8L389.6,323.7L390.7,321.8L391.9,322.2L393.0,321.5L394.2,321.4L395.3,321.4L396.5,320.2L397.6,317.7L398.8,318.3L399.9,318.1L401.1,314.3L402.2,317.2L403.4,316.7L404.6,315.4L405.7,316.1L406.9,314.0L408.0,315.9L409.2,315.1L410.3,313.8L411.5,312.8L412.6,312.4L413.8,312.4L414.9,312.3L416.1,309.7L417.2,308.6L418.4,309.7L419.6,308.1L420.7,308.7L421.9,308.1L423.0,308.3L424.2,306.0L425.3,307.3L426.5,305.7L427.6,306.2L428.8,304.7L429.9,304.9L431.1,303.2L432.2,304.9L433.4,303.7L434.6,303.5L435.7,300.5L436.9,300.4L438.0,297.8L439.2,301.6L440.3,300.3L441.5,298.6L442.6,298.2L443.8,299.6L444.9,298.2L446.1,294.6L447.2,296.4L448.4,296.0L449.6,296.9L450.7,295.1L451.9,295.5L453.0,295.8L454.2,293.8L455.3,292.7L456.5,292.2L457.6,292.4L458.8,292.0L459.9,292.7L461.1,289.8L462.2,289.0L463.4,287.8L464.6,288.7L465.7,287.9L466.9,288.7L468.0,288.9L469.2,287.5L470.3,286.4L471.5,286.0L472.6,285.6L473.8,285.5L474.9,285.9L476.1,283.2L477.2,284.5L478.4,281.5L479.6,282.2L480.7,280.9L481.9,282.2L483.0,280.1L484.2,280.2L485.3,279.6L486.5,278.2L487.6,279.0L488.8,279.2L489.9,277.4L491.1,276.5L492.2,277.2L492.2,279.4Z" fill="url(#g12)"/>
<path d="M365.3,336.3L365.3,297.4M380.3,329.5L380.3,307.4M383.8,327.9L383.8,323.1M387.2,326.3L387.2,285.7M397.6,321.6L397.6,288.9M413.8,314.2L413.8,309.5" stroke="url(#g12)" stroke-width="1.2"/>
<path d="M348.0,349.4L348.0,347.5L349.1,346.5L350.3,346.0L351.4,346.2L352.6,344.3L353.7,344.0L354.9,343.3L356.0,341.5L357.2,342.3L358.4,341.8L359.5,341.5L360.7,341.0L361.8,339.7L363.0,338.8L364.1,338.7L365.3,337.0L366.4,338.7L367.6,336.9L368.7,337.3L369.9,336.0L371.0,334.8L372.2,334.4L373.4,335.3L374.5,334.8L375.7,333.9L376.8,332.6L378.0,333.4L379.1,333.1L380.3,332.2L381.4,332.0L382.6,329.8L383.7,326.3L384.9,327.9L386.0,329.3L387.2,328.9L388.4,326.0L389.5,327.5L390.7,327.4L391.8,323.8L393.0,326.3L394.1,326.2L395.3,325.9L396.4,321.8L397.6,320.5L398.7,323.2L399.9,321.5L401.0,321.7L402.2,321.6L403.4,320.8L404.5,320.9L405.7,319.1L406.8,319.0L408.0,318.4L409.1,318.1L410.3,318.6L411.4,317.4L412.6,316.3L413.7,315.6L414.9,317.0L416.0,313.6L417.2,314.8L418.4,313.6L419.5,312.8L420.7,314.4L421.8,312.0L423.0,311.8L424.1,311.9L425.3,311.3L426.4,309.9L427.6,309.2L428.7,309.8L429.9,307.5L431.0,309.0L432.2,307.5L433.4,306.5L434.5,307.6L435.7,306.1L436.8,306.9L438.0,306.4L439.1,304.3L440.3,303.5L441.4,303.2L442.6,304.3L443.7,302.7L444.9,299.8L446.0,302.1L447.2,299.8L448.4,300.0L449.5,300.0L450.7,299.2L451.8,298.4L453.0,299.0L454.1,297.7L455.3,294.4L456.4,298.4L457.6,296.4L458.7,297.2L459.9,295.3L461.0,295.2L462.2,295.4L463.4,293.8L464.5,292.2L465.7,293.0L466.8,293.0L468.0,290.2L469.1,290.8L470.3,290.3L471.4,291.5L472.6,289.8L473.7,288.2L474.9,288.1L476.0,284.4L477.2,286.8L478.4,286.3L479.5,286.5L480.7,286.4L481.8,285.5L483.0,284.8L484.1,285.4L485.3,284.7L486.4,284.5L487.6,282.6L488.7,281.7L489.9,281.3L491.0,282.3L492.2,280.6L493.4,279.8L494.5,279.3L495.7,279.6L496.8,279.1L498.0,277.2L498.0,280.9Z" fill="url(#g13)"/>
<path d="M374.5,336.2L374.5,293.3M381.4,333.1L381.4,327.6M382.6,332.5L382.6,321.9M383.7,332.0L383.7,311.0M384.9,331.5L384.9,324.5M420.7,315.2L420.7,288.5" stroke="url(#g13)" stroke-width="1.2"/>
<path d="M353.7,350.8L353.7,349.5L354.9,345.9L356.0,347.3L357.2,347.0L358.3,345.4L359.5,345.4L360.6,346.2L361.8,345.3L362.9,344.7L364.1,341.8L365.2,343.8L366.4,343.2L367.5,341.4L368.7,338.9L369.9,341.5L371.0,340.2L372.2,339.2L373.3,338.1L374.5,339.7L375.6,337.2L376.8,336.7L377.9,334.8L379.1,337.2L380.2,334.9L381.4,335.2L382.5,335.3L383.7,335.7L384.9,334.1L386.0,331.0L387.2,333.5L388.3,331.0L389.5,332.0L390.6,332.4L391.8,330.3L392.9,327.2L394.1,330.3L395.2,326.5L396.4,329.0L397.5,327.1L398.7,326.9L399.9,326.6L401.0,325.3L402.2,325.1L403.3,322.6L404.5,322.5L405.6,323.4L406.8,321.2L407.9,322.5L409.1,322.6L410.2,322.3L411.4,322.7L412.5,320.9L413.7,320.8L414.9,320.5L416.0,320.4L417.2,318.1L418.3,318.6L419.5,316.9L420.6,316.8L421.8,315.8L422.9,317.5L424.1,314.1L425.2,315.3L426.4,314.9L427.5,314.2L428.7,313.2L429.9,313.1L431.0,312.9L432.2,312.9L433.3,312.8L434.5,311.5L435.6,310.5L436.8,311.4L437.9,310.0L439.1,309.6L440.2,309.2L441.4,309.4L442.5,307.2L443.7,308.0L444.9,305.9L446.0,305.8L447.2,303.2L448.3,304.2L449.5,302.6L450.6,303.8L451.8,302.3L452.9,302.2L454.1,301.6L455.2,300.0L456.4,300.6L457.5,300.3L458.7,300.1L459.9,299.5L461.0,299.6L462.2,298.1L463.3,299.3L464.5,296.5L465.6,295.8L466.8,297.6L467.9,296.8L469.1,294.4L470.2,292.8L471.4,294.4L472.5,292.9L473.7,294.6L474.9,291.6L476.0,291.3L477.2,292.0L478.3,290.6L479.5,290.3L480.6,291.1L481.8,290.5L482.9,288.7L484.1,286.1L485.2,288.6L486.4,287.8L487.5,286.3L488.7,286.6L489.9,284.8L491.0,286.3L492.2,285.4L493.3,282.2L494.5,283.3L495.6,281.4L496.8,282.4L497.9,282.3L499.1,281.5L500.2,280.5L501.4,280.0L502.5,278.2L503.7,277.8L503.7,282.3Z" fill="url(#g14)"/>
<path d="M376.8,339.3L376.8,320.8M395.2,330.9L395.2,286.6M419.5,319.8L419.5,299.5" stroke="url(#g14)" stroke-width="1.2"/>
<path d="M359.4,352.3L359.4,349.4L360.6,348.0L361.7,348.4L362.9,346.9L364.0,346.9L365.2,347.6L366.4,345.6L367.5,345.1L368.7,344.3L369.8,346.0L371.0,342.9L372.1,343.5L373.3,344.5L374.4,341.1L375.6,342.0L376.7,341.7L377.9,341.2L379.0,341.5L380.2,340.8L381.4,339.3L382.5,338.8L383.7,338.5L384.8,338.6L386.0,336.6L387.1,335.8L388.3,335.5L389.4,333.9L390.6,335.1L391.7,332.3L392.9,334.4L394.0,334.7L395.2,333.9L396.4,331.6L397.5,332.6L398.7,331.2L399.8,331.0L401.0,331.1L402.1,329.1L403.3,329.3L404.4,328.7L405.6,329.7L406.7,326.9L407.9,326.2L409.0,326.0L410.2,326.7L411.4,323.6L412.5,323.2L413.7,322.8L414.8,324.9L416.0,322.9L417.1,322.7L418.3,322.0L419.4,321.1L420.6,320.4L421.7,320.0L422.9,320.2L424.0,320.3L425.2,318.4L426.4,318.0L427.5,318.3L428.7,317.9L429.8,318.7L431.0,316.5L432.1,316.9L433.3,315.5L434.4,316.1L435.6,313.8L436.7,312.3L437.9,313.0L439.0,312.3L440.2,313.4L441.4,311.7L442.5,312.6L443.7,310.0L444.8,311.4L446.0,308.9L447.1,310.4L448.3,310.1L449.4,307.6L450.6,306.8L451.7,308.0L452.9,307.4L454.0,307.4L455.2,304.1L456.4,304.2L457.5,302.7L458.7,303.7L459.8,303.4L461.0,303.6L462.1,302.6L463.3,302.9L464.4,301.2L465.6,302.3L466.7,300.0L467.9,300.0L469.0,299.5L470.2,298.2L471.4,298.9L472.5,298.6L473.7,297.4L474.8,297.5L476.0,297.5L477.1,297.1L478.3,295.3L479.4,295.7L480.6,293.6L481.7,292.9L482.9,292.9L484.0,293.5L485.2,292.8L486.4,291.1L487.5,290.5L488.7,291.8L489.8,289.7L491.0,289.1L492.1,288.7L493.3,288.1L494.4,289.0L495.6,285.1L496.7,285.4L497.9,285.9L499.0,284.8L500.2,286.2L501.4,283.9L502.5,285.1L503.7,284.2L504.8,283.4L506.0,283.3L507.1,282.2L508.3,282.1L509.4,280.4L509.4,283.8Z" fill="url(#g15)"/>
<path d="M384.8,339.7L384.8,317.5M389.4,337.6L389.4,291.1M392.9,336.0L392.9,312.5M394.0,335.5L394.0,296.8M409.0,328.7L409.0,298.3M417.1,325.0L417.1,282.5M421.7,322.9L421.7,316.5M429.8,319.2L429.8,294.2" stroke="url(#g15)" stroke-width="1.2"/>
<path d="M365.2,353.8L365.2,350.3L366.3,350.0L367.5,347.5L368.6,348.7L369.8,349.9L370.9,349.6L372.1,347.0L373.2,346.5L374.4,347.5L375.5,347.6L376.7,346.7L377.8,346.4L379.0,345.1L380.2,345.2L381.3,344.8L382.5,343.8L383.6,342.9L384.8,343.2L385.9,342.5L387.1,342.0L388.2,341.2L389.4,338.1L390.5,338.4L391.7,337.6L392.8,339.3L394.0,337.3L395.2,337.2L396.3,337.9L397.5,336.2L398.6,335.1L399.8,335.2L400.9,336.0L402.1,335.1L403.2,334.3L404.4,332.8L405.5,332.6L406.7,333.5L407.8,332.4L409.0,331.6L410.2,331.1L411.3,330.3L412.5,330.7L413.6,327.9L414.8,329.1L415.9,328.3L417.1,327.7L418.2,327.2L419.4,327.2L420.5,326.0L421.7,324.1L422.8,324.4L424.0,322.6L425.2,324.6L426.3,323.4L427.5,322.1L428.6,322.9L429.8,322.4L430.9,320.4L432.1,321.3L433.2,321.4L434.4,318.8L435.5,319.5L436.7,318.1L437.8,316.8L439.0,316.3L440.2,317.6L441.3,317.6L442.5,316.0L443.6,315.5L444.8,315.2L445.9,313.9L447.1,314.1L448.2,314.3L449.4,312.8L450.5,312.4L451.7,310.7L452.8,312.0L454.0,306.8L455.2,309.0L456.3,309.4L457.5,308.0L458.6,307.4L459.8,308.4L460.9,307.1L462.1,303.9L463.2,307.1L464.4,304.9L465.5,304.7L466.7,302.5L467.8,303.5L469.0,302.5L470.2,302.5L471.3,300.8L472.5,303.1L473.6,300.9L474.8,301.6L475.9,299.2L477.1,301.3L478.2,299.5L479.4,299.1L480.5,296.4L481.7,296.9L482.8,296.5L484.0,298.2L485.2,297.5L486.3,295.8L487.5,295.9L488.6,295.5L489.8,294.0L490.9,293.6L492.1,290.5L493.2,293.6L494.4,291.2L495.5,292.8L496.7,291.7L497.8,289.3L499.0,290.1L500.2,290.7L501.3,285.7L502.5,287.5L503.6,288.5L504.8,288.1L505.9,286.3L507.1,284.5L508.2,285.2L509.4,285.1L510.5,283.8L511.7,285.1L512.8,284.4L514.0,282.9L515.2,282.3L515.2,285.3Z" fill="url(#g16)"/>
<path d="M385.9,343.3L385.9,315.7M387.1,342.8L387.1,314.2M389.4,341.8L389.4,335.0M403.2,335.4L403.2,326.3M405.5,334.4L405.5,296.4M413.6,330.7L413.6,313.3M418.2,328.6L418.2,285.2M424.0,325.9L424.0,293.1M425.2,325.4L425.2,272.2M426.3,324.9L426.3,310.6M428.6,323.8L428.6,306.7M429.8,323.3L429.8,311.3M432.1,322.3L432.1,308.6M439.0,319.1L439.0,313.6" stroke="url(#g16)" stroke-width="1.2"/>
<path d="M370.9,355.3L370.9,351.5L372.0,353.5L373.2,348.4L374.3,351.0L375.5,349.8L376.7,349.6L377.8,350.5L379.0,348.0L380.1,349.4L381.3,347.9L382.4,345.3L383.6,345.9L384.7,345.3L385.9,344.7L387.0,345.7L388.2,343.5L389.3,344.6L390.5,343.6L391.7,342.3L392.8,341.9L394.0,342.4L395.1,342.1L396.3,341.9L397.4,341.2L398.6,339.5L399.7,338.7L400.9,337.5L402.0,337.2L403.2,338.1L404.3,338.2L405.5,337.9L406.7,337.4L407.8,337.0L409.0,332.6L410.1,335.9L411.3,333.7L412.4,333.6L413.6,333.8L414.7,333.2L415.9,332.5L417.0,331.9L418.2,331.8L419.3,331.0L420.5,329.6L421.7,329.9L422.8,328.1L424.0,325.7L425.1,327.9L426.3,327.7L427.4,324.7L428.6,325.1L429.7,326.6L430.9,326.3L432.0,324.7L433.2,322.6L434.3,324.1L435.5,322.3L436.7,323.6L437.8,320.8L439.0,322.0L440.1,321.5L441.3,319.5L442.4,321.1L443.6,319.3L444.7,318.9L445.9,316.0L447.0,318.7L448.2,316.3L449.3,316.1L450.5,317.1L451.7,315.9L452.8,314.4L454.0,314.7L455.1,313.1L456.3,312.6L457.4,312.3L458.6,312.0L459.7,311.9L460.9,312.8L462.0,310.5L463.2,309.3L464.3,309.3L465.5,308.3L466.7,308.3L467.8,308.0L469.0,307.4L470.1,306.8L471.3,307.4L472.4,306.0L473.6,305.4L474.7,305.5L475.9,303.8L477.0,301.6L478.2,303.8L479.3,302.1L480.5,302.6L481.7,302.7L482.8,300.5L484.0,299.5L485.1,301.1L486.3,300.6L487.4,298.6L488.6,298.4L489.7,299.5L490.9,297.6L492.0,297.3L493.2,295.7L494.3,294.4L495.5,294.7L496.7,294.9L497.8,294.5L499.0,293.7L500.1,294.7L501.3,293.6L502.4,292.9L503.6,291.4L504.7,290.3L505.9,289.5L507.0,291.0L508.2,290.2L509.3,290.4L510.5,289.5L511.7,287.6L512.8,288.6L514.0,287.9L515.1,285.7L516.3,283.0L517.4,285.4L518.6,286.6L519.7,285.9L520.9,285.0L520.9,286.8Z" fill="url(#g17)"/>
<path d="M388.2,346.4L388.2,328.6M395.1,343.2L395.1,299.9M405.5,338.5L405.5,332.5M415.9,333.8L415.9,289.9M422.8,330.6L422.8,295.9M425.1,329.5L425.1,303.1M430.9,326.9L430.9,322.7M433.2,325.9L433.2,319.3M434.3,325.3L434.3,286.1M445.9,320.1L445.9,302.1" stroke="url(#g17)" stroke-width="1.2"/>
<path d="M376.6,356.8L376.6,353.3L377.8,354.2L378.9,354.0L380.1,352.0L381.2,352.2L382.4,352.7L383.5,350.6L384.7,349.6L385.8,349.5L387.0,350.4L388.2,347.9L389.3,347.1L390.5,347.5L391.6,346.5L392.8,347.1L393.9,346.1L395.1,342.9L396.2,345.9L397.4,342.7L398.5,341.9L399.7,344.5L400.8,344.0L402.0,343.1L403.2,340.7L404.3,342.2L405.5,341.3L406.6,339.1L407.8,339.6L408.9,340.3L410.1,335.7L411.2,337.8L412.4,335.7L413.5,337.9L414.7,336.1L415.8,335.6L417.0,336.8L418.2,336.0L419.3,334.6L420.5,333.4L421.6,330.0L422.8,333.3L423.9,331.9L425.1,331.4L426.2,331.2L427.4,329.7L428.5,330.8L429.7,328.6L430.8,327.0L432.0,327.7L433.2,329.1L434.3,327.5L435.5,327.0L436.6,326.5L437.8,325.5L438.9,325.9L440.1,325.1L441.2,323.5L442.4,324.9L443.5,320.0L444.7,321.4L445.8,323.5L447.0,319.8L448.2,319.7L449.3,321.4L450.5,319.9L451.6,320.8L452.8,319.7L453.9,319.7L455.1,318.4L456.2,317.1L457.4,317.2L458.5,316.7L459.7,315.1L460.8,313.8L462.0,313.3L463.2,314.0L464.3,313.8L465.5,314.1L466.6,312.9L467.8,311.6L468.9,312.6L470.1,311.5L471.2,311.8L472.4,309.2L473.5,308.7L474.7,308.9L475.8,308.2L477.0,307.1L478.2,308.1L479.3,305.1L480.5,308.0L481.6,306.5L482.8,304.6L483.9,304.1L485.1,305.1L486.2,302.7L487.4,303.5L488.5,302.5L489.7,303.2L490.8,303.2L492.0,300.8L493.2,301.0L494.3,300.1L495.5,299.7L496.6,299.9L497.8,297.9L498.9,298.4L500.1,297.0L501.2,297.0L502.4,295.8L503.5,295.5L504.7,294.3L505.8,294.3L507.0,294.4L508.2,293.3L509.3,293.3L510.5,292.8L511.6,293.7L512.8,289.6L513.9,290.9L515.1,291.5L516.2,288.0L517.4,288.3L518.5,287.7L519.7,287.7L520.8,289.3L522.0,287.2L523.2,286.3L524.3,285.7L525.5,284.5L526.6,285.1L526.6,288.3Z" fill="url(#g18)"/>
<path d="M396.2,346.8L396.2,333.0M398.5,345.8L398.5,326.8M412.4,339.5L412.4,298.4M414.7,338.4L414.7,285.8M427.4,332.6L427.4,313.0M434.3,329.4L434.3,310.8M443.5,325.2L443.5,286.9" stroke="url(#g18)" stroke-width="1.2"/>
<path d="M382.3,358.3L382.3,355.6L383.5,355.3L384.7,351.1L385.8,355.4L387.0,352.6L388.1,353.0L389.3,352.1L390.4,352.5L391.6,352.0L392.7,349.8L393.9,349.0L395.0,349.0L396.2,350.3L397.3,347.6L398.5,349.5L399.7,345.0L400.8,347.0L402.0,346.3L403.1,346.2L404.3,345.4L405.4,343.8L406.6,343.4L407.7,344.3L408.9,344.2L410.0,344.3L411.2,341.2L412.3,343.2L413.5,340.8L414.7,339.9L415.8,339.7L417.0,339.2L418.1,340.3L419.3,337.8L420.4,338.9L421.6,338.0L422.7,337.6L423.9,335.1L425.0,335.7L426.2,336.0L427.3,335.2L428.5,335.2L429.7,334.9L430.8,334.5L432.0,332.4L433.1,330.4L434.3,332.3L435.4,330.2L436.6,329.7L437.7,330.7L438.9,329.6L440.0,328.6L441.2,329.8L442.3,327.1L443.5,325.8L444.7,326.7L445.8,326.4L447.0,327.2L448.1,325.5L449.3,325.0L450.4,323.4L451.6,324.9L452.7,323.8L453.9,323.7L455.0,319.5L456.2,320.8L457.3,320.2L458.5,318.7L459.7,320.1L460.8,319.9L462.0,318.1L463.1,319.5L464.3,317.3L465.4,317.4L466.6,317.2L467.7,316.5L468.9,316.0L470.0,316.2L471.2,314.9L472.3,314.7L473.5,314.9L474.7,312.0L475.8,313.2L477.0,312.4L478.1,312.0L479.3,310.4L480.4,311.8L481.6,310.3L482.7,310.0L483.9,306.9L485.0,309.3L486.2,306.7L487.3,307.8L488.5,306.4L489.7,306.8L490.8,304.9L492.0,305.3L493.1,304.7L494.3,303.2L495.4,302.4L496.6,304.3L497.7,299.8L498.9,302.5L500.0,300.3L501.2,302.1L502.3,300.5L503.5,299.5L504.7,298.6L505.8,299.3L507.0,298.9L508.1,299.5L509.3,296.0L510.4,296.9L511.6,297.5L512.7,296.7L513.9,294.9L515.0,295.5L516.2,293.6L517.3,294.0L518.5,291.1L519.7,293.1L520.8,292.6L522.0,291.7L523.1,291.1L524.3,290.9L525.4,288.0L526.6,289.7L527.7,287.1L528.9,287.8L530.0,287.4L531.2,287.8L532.3,287.7L532.3,289.8Z" fill="url(#g19)"/>
<path d="M408.9,345.2L408.9,294.4M411.2,344.1L411.2,324.7M412.3,343.6L412.3,318.7M414.7,342.5L414.7,295.8M420.4,339.9L420.4,295.4M422.7,338.8L422.7,305.7M425.0,337.8L425.0,322.1M428.5,336.2L428.5,332.0M430.8,335.2L430.8,315.5M433.1,334.1L433.1,329.3M435.4,333.0L435.4,314.9M441.2,330.4L441.2,313.1M447.0,327.8L447.0,290.9M449.3,326.7L449.3,296.8M451.6,325.7L451.6,272.7" stroke="url(#g19)" stroke-width="1.2"/>
<path d="M388.1,359.8L388.1,357.5L389.2,354.9L390.4,355.3L391.5,353.1L392.7,355.4L393.8,355.8L395.0,352.2L396.1,354.4L397.3,352.6L398.5,352.4L399.6,353.0L400.8,351.9L401.9,349.9L403.1,350.0L404.2,349.0L405.4,348.7L406.5,346.5L407.7,346.7L408.8,347.9L410.0,346.7L411.1,343.0L412.3,346.0L413.5,345.0L414.6,346.0L415.8,343.4L416.9,344.6L418.1,344.3L419.2,343.5L420.4,342.8L421.5,340.8L422.7,340.7L423.8,339.4L425.0,341.2L426.1,339.3L427.3,338.2L428.5,337.8L429.6,335.1L430.8,334.1L431.9,338.2L433.1,337.8L434.2,337.4L435.4,336.8L436.5,335.7L437.7,334.2L438.8,334.4L440.0,333.9L441.1,331.7L442.3,331.1L443.5,332.3L444.6,330.6L445.8,331.2L446.9,327.7L448.1,330.2L449.2,328.4L450.4,328.4L451.5,328.7L452.7,327.5L453.8,326.3L455.0,323.9L456.1,326.4L457.3,325.6L458.5,325.3L459.6,323.3L460.8,323.4L461.9,322.6L463.1,319.6L464.2,322.1L465.4,320.3L466.5,321.2L467.7,319.5L468.8,319.4L470.0,320.1L471.1,319.1L472.3,319.4L473.5,319.1L474.6,318.8L475.8,316.7L476.9,317.6L478.1,314.7L479.2,315.8L480.4,315.7L481.5,313.5L482.7,314.6L483.8,314.0L485.0,313.6L486.1,311.8L487.3,311.5L488.5,312.3L489.6,312.0L490.8,310.2L491.9,309.1L493.1,310.0L494.2,307.5L495.4,308.5L496.5,307.2L497.7,306.4L498.8,305.4L500.0,305.8L501.1,305.9L502.3,304.9L503.5,305.0L504.6,301.7L505.8,303.0L506.9,301.6L508.1,301.4L509.2,302.5L510.4,299.3L511.5,301.2L512.7,299.7L513.8,299.7L515.0,300.1L516.1,299.1L517.3,296.6L518.5,296.7L519.6,296.7L520.8,296.8L521.9,296.4L523.1,294.4L524.2,293.8L525.4,295.6L526.5,293.2L527.7,294.0L528.8,291.1L530.0,293.0L531.1,292.0L532.3,290.8L533.5,291.5L534.6,290.9L535.8,288.8L536.9,290.0L538.1,286.1L538.1,291.3Z" fill="url(#g20)"/>
<path d="M405.4,350.9L405.4,322.8M406.5,350.3L406.5,338.6M408.8,349.3L408.8,292.1M411.1,348.2L411.1,329.4M412.3,347.7L412.3,324.9M414.6,346.7L414.6,338.0M418.1,345.1L418.1,311.2M419.2,344.5L419.2,289.1M425.0,341.9L425.0,281.9M426.1,341.4L426.1,337.1M430.8,339.3L430.8,301.5M433.1,338.2L433.1,324.3M437.7,336.1L437.7,279.0M443.5,333.5L443.5,285.7M453.8,328.7L453.8,323.2M455.0,328.2L455.0,300.5M457.3,327.2L457.3,300.7M458.5,326.6L458.5,321.3M459.6,326.1L459.6,291.2" stroke="url(#g20)" stroke-width="1.2"/>
<path d="M393.8,361.3L393.8,358.5L395.0,357.9L396.1,357.4L397.3,357.5L398.4,357.5L399.6,356.2L400.7,355.9L401.9,355.5L403.0,353.2L404.2,352.8L405.3,353.3L406.5,353.9L407.6,351.2L408.8,351.3L410.0,352.1L411.1,351.3L412.3,349.8L413.4,350.7L414.6,348.2L415.7,347.7L416.9,348.3L418.0,347.9L419.2,346.4L420.3,345.0L421.5,346.1L422.6,346.5L423.8,345.7L425.0,345.2L426.1,342.6L427.3,341.6L428.4,342.4L429.6,342.0L430.7,342.7L431.9,341.9L433.0,341.9L434.2,339.8L435.3,340.8L436.5,336.3L437.6,338.0L438.8,336.9L440.0,335.8L441.1,335.2L442.3,336.3L443.4,335.5L444.6,334.7L445.7,334.0L446.9,335.1L448.0,335.1L449.2,333.0L450.3,334.1L451.5,330.9L452.6,331.6L453.8,332.0L455.0,328.8L456.1,330.5L457.3,330.4L458.4,329.0L459.6,327.6L460.7,327.6L461.9,327.1L463.0,326.6L464.2,326.9L465.3,326.3L466.5,325.4L467.6,325.6L468.8,323.4L470.0,324.1L471.1,322.2L472.3,321.9L473.4,321.7L474.6,320.6L475.7,320.4L476.9,319.7L478.0,319.3L479.2,320.0L480.3,318.0L481.5,319.5L482.6,317.0L483.8,317.8L485.0,316.7L486.1,316.0L487.3,314.8L488.4,316.8L489.6,315.4L490.7,315.0L491.9,314.1L493.0,312.7L494.2,311.1L495.3,311.6L496.5,310.6L497.6,310.4L498.8,308.9L500.0,310.7L501.1,310.7L502.3,309.9L503.4,309.5L504.6,307.0L505.7,307.6L506.9,306.2L508.0,307.1L509.2,304.7L510.3,305.4L511.5,305.4L512.6,304.1L513.8,303.0L515.0,303.1L516.1,301.8L517.3,301.2L518.4,301.4L519.6,300.1L520.7,297.4L521.9,299.7L523.0,300.3L524.2,298.6L525.3,298.4L526.5,295.4L527.6,298.2L528.8,296.8L530.0,296.7L531.1,296.4L532.3,293.4L533.4,294.8L534.6,295.3L535.7,293.9L536.9,293.3L538.0,293.8L539.2,291.9L540.3,292.4L541.5,292.3L542.6,291.6L543.8,290.5L543.8,292.8Z" fill="url(#g21)"/>
<path d="M421.5,347.6L421.5,286.1M423.8,346.6L423.8,321.7M429.6,343.9L429.6,338.9M431.9,342.9L431.9,338.5M434.2,341.8L434.2,287.8M443.4,337.6L443.4,332.1M449.2,335.0L449.2,320.4M453.8,332.9L453.8,301.5M459.6,330.2L459.6,290.4M460.7,329.7L460.7,271.8M463.0,328.6L463.0,272.7M466.5,327.1L466.5,321.4" stroke="url(#g21)" stroke-width="1.2"/>
<path d="M399.5,362.7L399.5,359.0L400.7,360.1L401.8,359.1L403.0,357.8L404.1,356.2L405.3,356.2L406.5,355.7L407.6,355.3L408.8,354.2L409.9,355.9L411.1,351.1L412.2,354.0L413.4,354.0L414.5,353.1L415.7,352.4L416.8,352.5L418.0,351.0L419.1,350.6L420.3,351.6L421.5,350.8L422.6,349.6L423.8,349.3L424.9,348.1L426.1,348.8L427.2,344.6L428.4,346.5L429.5,347.3L430.7,346.5L431.8,344.9L433.0,342.2L434.1,344.1L435.3,343.2L436.5,343.2L437.6,341.9L438.8,343.1L439.9,340.8L441.1,342.4L442.2,341.6L443.4,339.8L444.5,338.9L445.7,339.3L446.8,339.5L448.0,337.6L449.1,334.6L450.3,336.5L451.5,336.4L452.6,336.6L453.8,334.4L454.9,335.7L456.1,334.3L457.2,333.6L458.4,333.7L459.5,329.8L460.7,332.6L461.8,329.7L463.0,330.5L464.1,329.9L465.3,330.0L466.5,329.1L467.6,329.1L468.8,327.6L469.9,327.6L471.1,326.7L472.2,327.6L473.4,325.1L474.5,327.2L475.7,325.0L476.8,324.6L478.0,321.3L479.1,323.7L480.3,322.1L481.5,323.4L482.6,321.8L483.8,322.1L484.9,322.4L486.1,317.3L487.2,319.0L488.4,319.4L489.5,319.1L490.7,318.8L491.8,315.6L493.0,317.6L494.1,317.3L495.3,316.7L496.5,316.8L497.6,314.6L498.8,315.8L499.9,314.3L501.1,313.1L502.2,313.7L503.4,311.2L504.5,311.6L505.7,311.1L506.8,310.8L508.0,309.3L509.1,308.6L510.3,310.6L511.5,307.9L512.6,308.5L513.8,308.9L514.9,307.2L516.1,306.8L517.2,305.5L518.4,305.6L519.5,304.1L520.7,305.7L521.8,304.5L523.0,303.4L524.1,304.0L525.3,301.6L526.5,300.4L527.6,300.5L528.8,302.1L529.9,301.2L531.1,299.2L532.2,300.3L533.4,298.0L534.5,298.3L535.7,298.1L536.8,297.3L538.0,297.7L539.1,295.8L540.3,295.0L541.5,295.9L542.6,295.4L543.8,293.5L544.9,292.9L546.1,294.4L547.2,292.0L548.4,293.1L549.5,292.9L549.5,294.2Z" fill="url(#g22)"/>
<path d="M416.8,353.8L416.8,309.4M418.0,353.3L418.0,349.2M421.5,351.7L421.5,310.7M423.8,350.7L423.8,325.3M427.2,349.1L427.2,334.2M429.5,348.0L429.5,298.8M431.8,347.0L431.8,288.6M436.5,344.9L436.5,304.9M442.2,342.3L442.2,295.3M446.8,340.1L446.8,289.3M451.5,338.0L451.5,326.2M452.6,337.5L452.6,291.6M454.9,336.5L454.9,300.8M456.1,335.9L456.1,329.7M461.8,333.3L461.8,326.7M463.0,332.8L463.0,327.9M467.6,330.7L467.6,279.8" stroke="url(#g22)" stroke-width="1.2"/>
<path d="M405.3,364.2L405.3,362.1L406.4,359.8L407.6,361.3L408.7,357.9L409.9,360.5L411.0,356.7L412.2,358.1L413.3,358.8L414.5,357.0L415.6,358.0L416.8,356.8L417.9,354.6L419.1,355.3L420.3,354.2L421.4,353.2L422.6,353.6L423.7,351.2L424.9,353.3L426.0,353.3L427.2,351.1L428.3,349.9L429.5,348.9L430.6,349.7L431.8,349.8L432.9,349.8L434.1,347.6L435.3,348.5L436.4,347.6L437.6,345.5L438.7,345.5L439.9,342.8L441.0,343.1L442.2,344.7L443.3,343.4L444.5,342.7L445.6,343.1L446.8,341.7L447.9,342.5L449.1,340.5L450.3,341.7L451.4,341.2L452.6,339.1L453.7,338.5L454.9,339.5L456.0,337.3L457.2,338.7L458.3,337.5L459.5,337.4L460.6,335.0L461.8,336.6L462.9,335.2L464.1,332.0L465.3,333.0L466.4,332.7L467.6,333.2L468.7,332.6L469.9,331.9L471.0,331.8L472.2,330.9L473.3,330.9L474.5,329.5L475.6,328.7L476.8,328.5L477.9,327.7L479.1,326.7L480.3,327.9L481.4,328.0L482.6,326.4L483.7,324.8L484.9,324.0L486.0,324.5L487.2,324.6L488.3,324.1L489.5,322.1L490.6,323.8L491.8,322.2L492.9,320.5L494.1,320.9L495.3,319.0L496.4,320.7L497.6,319.5L498.7,318.0L499.9,317.4L501.0,316.8L502.2,317.4L503.3,316.9L504.5,317.4L505.6,315.4L506.8,315.8L507.9,314.4L509.1,313.7L510.3,314.7L511.4,311.9L512.6,312.1L513.7,312.0L514.9,311.0L516.0,312.1L517.2,311.1L518.3,310.2L519.5,308.2L520.6,308.4L521.8,308.7L522.9,309.1L524.1,306.3L525.3,306.3L526.4,305.2L527.6,306.5L528.7,304.2L529.9,302.2L531.0,302.9L532.2,304.8L533.3,302.3L534.5,301.8L535.6,301.0L536.8,301.5L537.9,301.4L539.1,300.3L540.3,297.3L541.4,298.3L542.6,299.1L543.7,299.2L544.9,297.3L546.0,294.1L547.2,297.8L548.3,297.3L549.5,295.5L550.6,295.1L551.8,295.0L552.9,294.0L554.1,292.4L555.3,293.5L555.3,295.7Z" fill="url(#g23)"/>
<path d="M424.9,354.3L424.9,328.3M428.3,352.7L428.3,297.3M431.8,351.1L431.8,303.4M434.1,350.1L434.1,314.9M435.3,349.5L435.3,316.5M437.6,348.5L437.6,344.5M438.7,348.0L438.7,342.9M443.3,345.8L443.3,316.0M444.5,345.3L444.5,304.2M449.1,343.2L449.1,330.6M451.4,342.2L451.4,309.7M453.7,341.1L453.7,288.2M456.0,340.1L456.0,293.5M457.2,339.5L457.2,323.2M458.3,339.0L458.3,330.1M462.9,336.9L462.9,311.8M464.1,336.4L464.1,331.7M472.2,332.7L472.2,326.9M474.5,331.6L474.5,289.0M475.6,331.1L475.6,317.8M479.1,329.5L479.1,299.6" stroke="url(#g23)" stroke-width="1.2"/>
<path d="M411.0,365.7L411.0,362.8L412.1,363.4L413.3,361.1L414.4,361.3L415.6,359.4L416.8,359.4L417.9,359.7L419.1,359.8L420.2,359.1L421.4,357.8L422.5,355.2L423.7,357.4L424.8,358.0L426.0,355.7L427.1,353.6L428.3,354.0L429.4,353.9L430.6,353.0L431.8,353.7L432.9,352.1L434.1,349.8L435.2,351.4L436.4,350.8L437.5,349.8L438.7,347.8L439.8,347.8L441.0,348.9L442.1,350.2L443.3,347.0L444.4,347.9L445.6,346.3L446.8,347.8L447.9,344.1L449.1,346.9L450.2,345.7L451.4,343.9L452.5,343.3L453.7,341.5L454.8,342.3L456.0,343.8L457.1,341.0L458.3,342.3L459.4,339.8L460.6,340.6L461.8,338.6L462.9,338.6L464.1,338.4L465.2,337.2L466.4,337.5L467.5,337.4L468.7,336.7L469.8,335.9L471.0,334.8L472.1,334.6L473.3,334.5L474.4,333.0L475.6,333.6L476.8,333.5L477.9,333.1L479.1,333.0L480.2,332.1L481.4,330.0L482.5,330.5L483.7,329.2L484.8,330.2L486.0,329.9L487.1,329.4L488.3,328.2L489.4,327.6L490.6,328.0L491.8,325.2L492.9,326.6L494.1,324.4L495.2,325.0L496.4,321.2L497.5,323.4L498.7,322.2L499.8,322.3L501.0,320.8L502.1,321.4L503.3,319.9L504.4,321.0L505.6,318.8L506.8,318.3L507.9,317.0L509.1,319.1L510.2,318.6L511.4,316.8L512.5,315.8L513.7,317.0L514.8,315.4L516.0,313.9L517.1,314.2L518.3,315.2L519.4,314.1L520.6,313.9L521.8,313.2L522.9,312.8L524.1,311.0L525.2,309.9L526.4,311.0L527.5,309.4L528.7,308.9L529.8,310.1L531.0,308.0L532.1,309.1L533.3,308.4L534.4,306.6L535.6,305.2L536.8,305.9L537.9,304.6L539.1,304.0L540.2,303.3L541.4,302.8L542.5,302.8L543.7,300.2L544.8,302.2L546.0,300.2L547.1,298.9L548.3,300.9L549.4,300.1L550.6,299.0L551.8,300.0L552.9,297.8L554.1,298.5L555.2,296.2L556.4,297.4L557.5,293.4L558.7,295.7L559.8,295.4L561.0,293.4L561.0,297.2Z" fill="url(#g24)"/>
<path d="M428.3,356.8L428.3,346.6M430.6,355.8L430.6,294.5M432.9,354.7L432.9,339.7M437.5,352.6L437.5,345.7M439.8,351.6L439.8,338.1M442.1,350.5L442.1,313.0M443.3,350.0L443.3,307.4M444.4,349.4L444.4,328.1M445.6,348.9L445.6,326.8M449.1,347.3L449.1,321.2M451.4,346.3L451.4,314.8M457.1,343.6L457.1,329.6M458.3,343.1L458.3,338.0M459.4,342.6L459.4,285.4M460.6,342.1L460.6,295.8M471.0,337.3L471.0,320.1M473.3,336.3L473.3,317.7M474.4,335.7L474.4,302.0M481.4,332.6L481.4,318.7M482.5,332.1L482.5,316.7" stroke="url(#g24)" stroke-width="1.2"/>
<path d="M416.7,367.2L416.7,363.7L417.9,364.5L419.0,363.5L420.2,363.0L421.3,362.8L422.5,360.3L423.6,358.4L424.8,362.0L425.9,361.5L427.1,360.4L428.3,359.0L429.4,357.8L430.6,359.4L431.7,356.7L432.9,356.8L434.0,356.9L435.2,355.4L436.3,355.0L437.5,354.9L438.6,355.9L439.8,354.6L440.9,354.5L442.1,352.1L443.3,353.1L444.4,352.2L445.6,352.0L446.7,350.9L447.9,349.8L449.0,347.7L450.2,349.1L451.3,348.5L452.5,348.9L453.6,344.4L454.8,347.9L455.9,346.9L457.1,346.1L458.3,344.3L459.4,344.2L460.6,345.4L461.7,344.4L462.9,343.3L464.0,343.8L465.2,343.5L466.3,341.6L467.5,342.4L468.6,341.2L469.8,341.4L470.9,340.4L472.1,337.9L473.3,337.8L474.4,339.3L475.6,337.4L476.7,334.6L477.9,335.4L479.0,336.8L480.2,334.6L481.3,334.3L482.5,332.5L483.6,331.4L484.8,333.3L485.9,333.5L487.1,332.5L488.3,331.9L489.4,330.6L490.6,329.6L491.7,331.2L492.9,329.2L494.0,330.6L495.2,327.6L496.3,324.9L497.5,327.1L498.6,327.3L499.8,327.3L500.9,325.6L502.1,324.6L503.3,324.6L504.4,324.3L505.6,323.5L506.7,321.1L507.9,322.8L509.0,321.3L510.2,323.1L511.3,320.8L512.5,321.9L513.6,320.9L514.8,320.5L515.9,319.4L517.1,317.3L518.3,317.4L519.4,316.7L520.6,317.9L521.7,317.1L522.9,313.8L524.0,316.5L525.2,313.8L526.3,314.8L527.5,313.4L528.6,313.2L529.8,312.8L530.9,313.4L532.1,312.6L533.3,312.3L534.4,309.8L535.6,309.8L536.7,310.6L537.9,308.5L539.0,308.7L540.2,306.0L541.3,304.8L542.5,304.2L543.6,303.3L544.8,306.3L545.9,306.3L547.1,304.2L548.3,303.4L549.4,303.4L550.6,304.0L551.7,301.1L552.9,302.9L554.0,301.3L555.2,300.9L556.3,299.3L557.5,300.9L558.6,298.8L559.8,299.8L560.9,299.6L562.1,298.1L563.3,297.8L564.4,297.6L565.6,297.8L566.7,294.9L566.7,298.7Z" fill="url(#g25)"/>
<path d="M440.9,355.1L440.9,347.1M442.1,354.6L442.1,288.9M445.6,353.0L445.6,334.1M446.7,352.5L446.7,311.6M451.3,350.4L451.3,324.5M452.5,349.9L452.5,311.2M464.0,344.6L464.0,299.2M465.2,344.1L465.2,282.8M467.5,343.0L467.5,323.9M468.6,342.5L468.6,334.5M474.4,339.9L474.4,321.0M476.7,338.8L476.7,317.0M479.0,337.8L479.0,276.1M481.3,336.7L481.3,331.9" stroke="url(#g25)" stroke-width="1.2"/>
<path d="M422.4,368.7L422.4,364.3L423.6,366.7L424.8,364.7L425.9,363.0L427.1,364.3L428.2,363.8L429.4,364.0L430.5,363.4L431.7,360.5L432.8,359.8L434.0,362.1L435.1,357.5L436.3,360.6L437.4,359.0L438.6,359.1L439.8,358.4L440.9,358.1L442.1,356.1L443.2,355.0L444.4,356.9L445.5,354.4L446.7,354.4L447.8,354.2L449.0,355.0L450.1,353.4L451.3,354.0L452.4,352.2L453.6,350.9L454.8,349.3L455.9,349.0L457.1,351.0L458.2,351.0L459.4,348.0L460.5,349.0L461.7,345.5L462.8,348.5L464.0,347.5L465.1,346.4L466.3,347.0L467.4,345.6L468.6,345.1L469.8,343.6L470.9,344.6L472.1,344.1L473.2,342.4L474.4,343.6L475.5,341.4L476.7,341.7L477.8,339.4L479.0,340.4L480.1,340.5L481.3,338.4L482.4,339.9L483.6,334.9L484.8,338.2L485.9,337.4L487.1,335.3L488.2,336.0L489.4,335.1L490.5,332.7L491.7,335.4L492.8,335.2L494.0,333.6L495.1,332.9L496.3,331.7L497.4,333.0L498.6,331.0L499.8,332.1L500.9,329.4L502.1,329.2L503.2,330.4L504.4,328.5L505.5,327.4L506.7,328.6L507.8,327.9L509.0,324.5L510.1,325.2L511.3,324.1L512.4,325.7L513.6,324.6L514.8,322.8L515.9,322.9L517.1,322.0L518.2,321.8L519.4,321.1L520.5,320.7L521.7,320.0L522.8,318.0L524.0,318.5L525.1,319.3L526.3,319.5L527.4,317.2L528.6,316.5L529.8,315.9L530.9,315.7L532.1,316.0L533.2,315.0L534.4,313.1L535.5,313.5L536.7,312.9L537.8,312.0L539.0,311.6L540.1,312.4L541.3,311.2L542.4,311.1L543.6,310.0L544.8,311.5L545.9,310.0L547.1,309.3L548.2,309.7L549.4,307.3L550.5,307.5L551.7,305.9L552.8,305.5L554.0,306.1L555.1,304.7L556.3,303.9L557.4,302.8L558.6,303.7L559.8,303.7L560.9,303.9L562.1,303.3L563.2,302.0L564.4,301.6L565.5,301.3L566.7,299.3L567.8,300.4L569.0,299.8L570.1,298.5L571.3,299.4L572.4,298.0L572.4,300.2Z" fill="url(#g26)"/>
<path d="M444.4,357.7L444.4,353.1M446.7,356.6L446.7,346.1M447.8,356.1L447.8,344.8M450.1,355.1L450.1,350.0M455.9,352.4L455.9,314.0M458.2,351.4L458.2,302.6M461.7,349.8L461.7,326.5M462.8,349.3L462.8,283.9M464.0,348.7L464.0,335.2M470.9,345.6L470.9,323.1M472.1,345.0L472.1,332.2M479.0,341.9L479.0,279.2M490.5,336.6L490.5,320.6" stroke="url(#g26)" stroke-width="1.2"/>
<path d="M428.2,370.2L428.2,366.3L429.3,366.6L430.5,365.6L431.6,365.8L432.8,365.7L433.9,364.3L435.1,365.3L436.2,364.6L437.4,361.1L438.6,362.1L439.7,362.4L440.9,362.0L442.0,360.5L443.2,361.9L444.3,358.6L445.5,358.4L446.6,358.7L447.8,357.1L448.9,357.4L450.1,358.0L451.2,356.1L452.4,355.3L453.6,354.8L454.7,356.1L455.9,352.9L457.0,353.6L458.2,353.7L459.3,352.3L460.5,352.4L461.6,351.0L462.8,351.5L463.9,350.8L465.1,351.3L466.2,349.7L467.4,348.0L468.6,348.5L469.7,347.6L470.9,346.8L472.0,348.3L473.2,346.2L474.3,347.3L475.5,347.0L476.6,344.2L477.8,345.1L478.9,345.0L480.1,343.1L481.2,342.6L482.4,344.0L483.6,342.5L484.7,342.6L485.9,341.4L487.0,340.1L488.2,341.2L489.3,340.7L490.5,337.9L491.6,339.4L492.8,337.7L493.9,336.5L495.1,337.8L496.2,336.4L497.4,335.1L498.6,335.5L499.7,335.0L500.9,334.8L502.0,330.6L503.2,332.4L504.3,332.6L505.5,331.5L506.6,329.3L507.8,331.4L508.9,329.4L510.1,329.6L511.2,327.6L512.4,329.1L513.6,328.0L514.7,327.5L515.9,326.8L517.0,327.6L518.2,326.6L519.3,324.5L520.5,324.3L521.6,324.6L522.8,325.3L523.9,325.1L525.1,321.1L526.2,323.7L527.4,321.8L528.6,321.9L529.7,321.6L530.9,320.3L532.0,319.5L533.2,317.0L534.3,317.8L535.5,319.4L536.6,317.0L537.8,318.2L538.9,317.5L540.1,316.1L541.2,317.2L542.4,314.4L543.6,314.5L544.7,314.8L545.9,314.6L547.0,314.5L548.2,313.8L549.3,313.1L550.5,312.3L551.6,310.4L552.8,310.2L553.9,311.0L555.1,309.7L556.2,308.3L557.4,308.5L558.6,305.7L559.7,307.8L560.9,306.9L562.0,305.2L563.2,306.4L564.3,304.9L565.5,303.9L566.6,304.6L567.8,303.4L568.9,302.5L570.1,302.3L571.2,300.8L572.4,302.1L573.6,300.2L574.7,300.8L575.9,299.8L577.0,298.8L578.2,298.6L578.2,301.7Z" fill="url(#g27)"/>
<path d="M447.8,360.2L447.8,349.6M452.4,358.1L452.4,335.9M455.9,356.5L455.9,332.8M465.1,352.3L465.1,303.3M480.1,345.5L480.1,333.6M487.0,342.3L487.0,282.1M488.2,341.8L488.2,332.5M492.8,339.7L492.8,277.9M496.2,338.1L496.2,294.1M499.7,336.5L499.7,277.1" stroke="url(#g27)" stroke-width="1.2"/>
<path d="M433.9,371.7L433.9,369.1L435.1,369.7L436.2,367.1L437.4,364.7L438.5,366.1L439.7,365.8L440.8,365.1L442.0,365.2L443.1,364.5L444.3,365.1L445.4,362.8L446.6,363.7L447.7,361.5L448.9,362.3L450.1,361.9L451.2,362.4L452.4,360.1L453.5,360.7L454.7,358.7L455.8,359.1L457.0,359.0L458.1,358.8L459.3,356.0L460.4,356.7L461.6,357.3L462.7,352.2L463.9,356.1L465.1,355.9L466.2,353.6L467.4,354.1L468.5,353.1L469.7,352.3L470.8,351.2L472.0,350.6L473.1,352.1L474.3,349.4L475.4,349.2L476.6,347.8L477.7,349.9L478.9,345.4L480.1,348.9L481.2,348.6L482.4,346.7L483.5,344.0L484.7,346.1L485.8,346.6L487.0,345.2L488.1,344.9L489.3,343.2L490.4,342.5L491.6,342.9L492.7,340.0L493.9,340.1L495.1,339.0L496.2,339.1L497.4,339.8L498.5,340.2L499.7,340.2L500.8,336.6L502.0,336.7L503.1,338.0L504.3,338.0L505.4,337.5L506.6,337.0L507.7,334.7L508.9,333.7L510.1,331.9L511.2,333.0L512.4,333.3L513.5,333.8L514.7,332.3L515.8,330.9L517.0,329.2L518.1,330.5L519.3,329.7L520.4,330.3L521.6,329.0L522.7,328.8L523.9,327.1L525.1,326.5L526.2,327.9L527.4,325.8L528.5,324.7L529.7,324.4L530.8,324.2L532.0,325.5L533.1,323.3L534.3,323.5L535.4,322.2L536.6,322.7L537.7,321.6L538.9,320.0L540.1,317.7L541.2,321.3L542.4,319.8L543.5,315.8L544.7,318.1L545.8,318.2L547.0,315.9L548.1,317.4L549.3,316.2L550.4,316.7L551.6,315.5L552.7,316.0L553.9,312.5L555.1,313.5L556.2,313.0L557.4,311.7L558.5,310.6L559.7,311.4L560.8,311.3L562.0,308.7L563.1,309.4L564.3,309.3L565.4,309.3L566.6,307.4L567.7,308.8L568.9,308.1L570.1,305.8L571.2,305.7L572.4,306.9L573.5,305.8L574.7,304.8L575.8,304.0L577.0,303.9L578.1,301.7L579.3,301.5L580.4,302.4L581.6,302.0L582.7,301.0L583.9,298.7L583.9,303.2Z" fill="url(#g28)"/>
<path d="M457.0,360.1L457.0,335.7M460.4,358.6L460.4,353.8M473.1,352.8L473.1,345.9M478.9,350.1L478.9,345.6M480.1,349.6L480.1,319.7M484.7,347.5L484.7,287.4M487.0,346.4L487.0,299.5M492.7,343.8L492.7,338.6M493.9,343.3L493.9,329.3M502.0,339.6L502.0,281.3M505.4,338.0L505.4,333.9M508.9,336.4L508.9,286.7" stroke="url(#g28)" stroke-width="1.2"/>
<path d="M439.6,373.2L439.6,368.5L440.8,369.3L441.9,370.0L443.1,368.1L444.2,367.2L445.4,369.2L446.6,368.0L447.7,367.2L448.9,366.9L450.0,365.4L451.2,364.8L452.3,365.9L453.5,360.9L454.6,364.1L455.8,362.1L456.9,362.4L458.1,360.8L459.2,361.1L460.4,362.1L461.6,361.7L462.7,358.0L463.9,360.1L465.0,355.8L466.2,359.0L467.3,357.4L468.5,357.9L469.6,357.5L470.8,355.6L471.9,356.1L473.1,356.4L474.2,355.5L475.4,354.1L476.6,354.5L477.7,354.3L478.9,352.7L480.0,351.3L481.2,350.8L482.3,349.3L483.5,349.0L484.6,350.4L485.8,349.9L486.9,347.9L488.1,346.2L489.2,346.6L490.4,347.8L491.6,347.8L492.7,344.0L493.9,346.5L495.0,344.5L496.2,344.3L497.3,343.7L498.5,344.9L499.6,342.7L500.8,343.9L501.9,343.2L503.1,342.0L504.2,341.6L505.4,341.0L506.6,338.6L507.7,340.7L508.9,339.3L510.0,337.9L511.2,336.6L512.3,338.6L513.5,335.8L514.6,336.6L515.8,336.9L516.9,336.2L518.1,335.2L519.2,334.2L520.4,333.8L521.6,334.2L522.7,332.1L523.9,332.8L525.0,330.9L526.2,331.7L527.3,331.1L528.5,329.5L529.6,327.1L530.8,329.2L531.9,329.4L533.1,328.6L534.2,326.2L535.4,327.7L536.6,324.7L537.7,327.0L538.9,326.0L540.0,325.5L541.2,324.5L542.3,322.8L543.5,322.7L544.6,322.4L545.8,320.9L546.9,319.8L548.1,321.3L549.2,321.6L550.4,318.5L551.6,320.4L552.7,320.1L553.9,319.1L555.0,316.9L556.2,314.6L557.3,317.4L558.5,315.5L559.6,316.0L560.8,316.1L561.9,313.9L563.1,314.2L564.2,312.0L565.4,313.0L566.6,313.6L567.7,313.3L568.9,309.8L570.0,310.8L571.2,310.8L572.3,311.1L573.5,308.0L574.6,306.2L575.8,308.7L576.9,307.9L578.1,304.7L579.2,306.2L580.4,304.9L581.6,306.4L582.7,304.2L583.9,304.5L585.0,304.3L586.2,302.9L587.3,302.9L588.5,301.6L589.6,301.1L589.6,304.7Z" fill="url(#g29)"/>
<path d="M456.9,364.3L456.9,344.8M459.2,363.2L459.2,339.4M463.9,361.1L463.9,352.5M465.0,360.6L465.0,332.9M468.5,359.0L468.5,304.0M470.8,357.9L470.8,340.0M475.4,355.8L475.4,312.4M477.7,354.8L477.7,325.8M486.9,350.6L486.9,321.7M491.6,348.5L491.6,288.1M495.0,346.9L495.0,292.2M503.1,343.2L503.1,337.4M510.0,340.0L510.0,331.2" stroke="url(#g29)" stroke-width="1.2"/>
<path d="M445.4,374.7L445.4,373.1L446.5,370.3L447.7,370.0L448.8,369.2L450.0,368.8L451.1,370.0L452.3,368.2L453.4,367.2L454.6,366.5L455.7,368.5L456.9,366.2L458.0,366.4L459.2,365.0L460.4,364.4L461.5,364.4L462.7,363.6L463.8,364.8L465.0,363.8L466.1,361.4L467.3,360.5L468.4,359.9L469.6,361.5L470.7,360.9L471.9,359.7L473.0,359.1L474.2,357.6L475.4,358.8L476.5,357.0L477.7,357.3L478.8,356.0L480.0,352.9L481.1,353.4L482.3,355.0L483.4,355.5L484.6,354.0L485.7,354.0L486.9,353.4L488.0,352.2L489.2,351.4L490.4,351.1L491.5,347.7L492.7,350.9L493.8,346.3L495.0,348.0L496.1,349.4L497.3,346.5L498.4,345.6L499.6,346.8L500.7,347.1L501.9,344.3L503.0,345.8L504.2,345.0L505.4,345.1L506.5,341.5L507.7,342.6L508.8,343.3L510.0,342.5L511.1,341.3L512.3,341.5L513.4,338.7L514.6,340.9L515.7,339.9L516.9,338.7L518.0,339.7L519.2,337.3L520.4,337.8L521.5,337.7L522.7,336.4L523.8,336.1L525.0,335.9L526.1,335.5L527.3,334.8L528.4,332.8L529.6,332.8L530.7,333.7L531.9,333.2L533.0,328.5L534.2,332.5L535.4,329.9L536.5,329.5L537.7,325.8L538.8,328.3L540.0,327.5L541.1,326.9L542.3,327.2L543.4,327.2L544.6,326.4L545.7,325.8L546.9,326.1L548.0,325.3L549.2,323.7L550.4,321.8L551.5,323.9L552.7,323.6L553.8,323.3L555.0,321.7L556.1,320.8L557.3,319.9L558.4,318.5L559.6,320.4L560.7,318.9L561.9,320.1L563.0,318.6L564.2,315.6L565.4,316.7L566.5,315.8L567.7,315.1L568.8,314.7L570.0,313.1L571.1,311.3L572.3,314.2L573.4,312.5L574.6,313.4L575.7,312.8L576.9,311.6L578.0,311.0L579.2,311.2L580.4,310.8L581.5,309.3L582.7,309.9L583.8,309.1L585.0,309.6L586.1,307.1L587.3,308.1L588.4,307.0L589.6,306.7L590.7,306.0L591.9,304.8L593.0,304.1L594.2,303.7L595.4,302.0L595.4,306.2Z" fill="url(#g30)"/>
<path d="M467.3,363.6L467.3,316.1M470.7,362.1L470.7,336.2M475.4,360.0L475.4,353.2M477.7,358.9L477.7,303.0M486.9,354.7L486.9,339.2M492.7,352.1L492.7,337.6M493.8,351.5L493.8,344.3M495.0,351.0L495.0,298.8M500.7,348.4L500.7,312.7M503.0,347.3L503.0,334.6M510.0,344.1L510.0,314.7M511.1,343.6L511.1,299.3M514.6,342.0L514.6,337.9M520.4,339.4L520.4,308.7" stroke="url(#g30)" stroke-width="1.2"/>
<path d="M451.1,376.1L451.1,373.1L452.2,371.1L453.4,373.7L454.5,372.6L455.7,371.3L456.9,369.3L458.0,367.1L459.2,370.5L460.3,369.8L461.5,368.0L462.6,367.6L463.8,367.6L464.9,367.4L466.1,366.5L467.2,365.0L468.4,364.9L469.5,365.9L470.7,365.1L471.9,362.2L473.0,362.7L474.2,362.1L475.3,363.7L476.5,361.4L477.6,360.5L478.8,360.5L479.9,357.3L481.1,359.0L482.2,358.2L483.4,359.2L484.5,358.3L485.7,359.0L486.9,354.9L488.0,357.4L489.2,355.9L490.3,356.4L491.5,351.4L492.6,355.7L493.8,351.8L494.9,352.3L496.1,353.9L497.2,351.6L498.4,352.3L499.5,350.4L500.7,349.2L501.9,350.0L503.0,349.7L504.2,347.7L505.3,349.0L506.5,348.3L507.6,346.9L508.8,347.5L509.9,346.5L511.1,346.1L512.2,344.9L513.4,344.9L514.5,344.9L515.7,344.9L516.9,342.3L518.0,342.4L519.2,343.0L520.3,341.4L521.5,341.6L522.6,341.5L523.8,338.2L524.9,339.3L526.1,340.4L527.2,337.8L528.4,337.0L529.5,338.2L530.7,338.5L531.9,336.1L533.0,337.3L534.2,335.4L535.3,333.9L536.5,334.9L537.6,333.3L538.8,332.6L539.9,332.5L541.1,331.2L542.2,332.0L543.4,331.5L544.5,331.5L545.7,330.4L546.9,330.5L548.0,329.5L549.2,329.1L550.3,327.5L551.5,328.1L552.6,328.2L553.8,327.4L554.9,326.9L556.1,326.3L557.2,324.1L558.4,325.2L559.5,324.8L560.7,322.3L561.9,323.1L563.0,323.4L564.2,320.9L565.3,320.6L566.5,320.5L567.6,320.1L568.8,319.0L569.9,317.0L571.1,316.6L572.2,317.4L573.4,314.0L574.5,317.1L575.7,315.5L576.9,317.3L578.0,314.9L579.2,314.6L580.3,313.2L581.5,314.0L582.6,312.2L583.8,312.6L584.9,312.6L586.1,311.2L587.2,311.2L588.4,311.2L589.5,311.6L590.7,310.7L591.9,310.0L593.0,309.1L594.2,309.0L595.3,307.9L596.5,308.2L597.6,307.8L598.8,305.0L599.9,306.4L601.1,305.5L601.1,307.6Z" fill="url(#g31)"/>
<path d="M470.7,366.2L470.7,338.0M483.4,360.4L483.4,310.0M485.7,359.3L485.7,354.4M508.8,348.8L508.8,317.4M512.2,347.2L512.2,324.8M523.8,341.9L523.8,314.0M526.1,340.9L526.1,331.8" stroke="url(#g31)" stroke-width="1.2"/>
<path d="M456.8,377.6L456.8,374.0L458.0,373.3L459.1,375.1L460.3,374.4L461.4,372.7L462.6,371.9L463.7,371.0L464.9,369.8L466.0,371.5L467.2,370.7L468.4,369.5L469.5,370.0L470.7,368.9L471.8,368.7L473.0,368.4L474.1,367.0L475.3,365.3L476.4,365.7L477.6,366.1L478.7,364.0L479.9,362.0L481.0,363.2L482.2,363.2L483.4,363.2L484.5,361.7L485.7,362.2L486.8,361.3L488.0,360.8L489.1,360.9L490.3,360.4L491.4,359.0L492.6,357.6L493.7,356.9L494.9,357.8L496.0,356.7L497.2,355.6L498.4,355.0L499.5,355.5L500.7,354.3L501.8,353.4L503.0,352.8L504.1,352.5L505.3,353.4L506.4,352.2L507.6,350.7L508.7,351.4L509.9,351.0L511.0,349.6L512.2,348.6L513.4,349.7L514.5,348.7L515.7,348.2L516.8,347.7L518.0,346.9L519.1,346.0L520.3,346.4L521.4,346.6L522.6,344.0L523.7,345.7L524.9,345.1L526.0,343.9L527.2,342.0L528.4,342.9L529.5,342.9L530.7,342.4L531.8,340.3L533.0,338.9L534.1,337.3L535.3,338.6L536.4,338.0L537.6,337.3L538.7,336.6L539.9,338.1L541.0,335.7L542.2,333.0L543.4,335.5L544.5,333.7L545.7,331.5L546.8,334.4L548.0,333.0L549.1,333.2L550.3,332.0L551.4,330.9L552.6,332.0L553.7,329.1L554.9,330.9L556.0,327.8L557.2,330.2L558.4,329.2L559.5,325.3L560.7,328.8L561.8,327.6L563.0,327.6L564.1,325.6L565.3,324.8L566.4,325.7L567.6,322.7L568.7,323.4L569.9,324.4L571.0,322.9L572.2,321.0L573.4,320.9L574.5,320.5L575.7,320.9L576.8,321.2L578.0,318.1L579.1,319.7L580.3,317.5L581.4,318.4L582.6,316.4L583.7,318.1L584.9,317.3L586.0,317.3L587.2,316.4L588.4,316.2L589.5,314.6L590.7,314.0L591.8,314.3L593.0,312.2L594.1,312.3L595.3,310.6L596.4,311.8L597.6,310.1L598.7,309.3L599.9,308.9L601.0,307.5L602.2,306.3L603.4,308.5L604.5,308.5L605.7,305.9L606.8,307.5L606.8,309.1Z" fill="url(#g32)"/>
<path d="M477.6,367.1L477.6,342.1M490.3,361.4L490.3,326.5M496.0,358.7L496.0,306.6M498.4,357.7L498.4,333.7M503.0,355.6L503.0,314.9M508.7,352.9L508.7,328.2M519.1,348.2L519.1,341.7" stroke="url(#g32)" stroke-width="1.2"/>
<path d="M462.5,379.1L462.5,375.3L463.7,375.7L464.9,375.7L466.0,375.9L467.2,374.4L468.3,375.2L469.5,373.6L470.6,373.6L471.8,372.2L472.9,371.3L474.1,369.8L475.2,371.2L476.4,368.9L477.5,369.7L478.7,367.6L479.9,369.8L481.0,368.1L482.2,368.7L483.3,366.1L484.5,367.6L485.6,365.4L486.8,365.4L487.9,364.3L489.1,361.0L490.2,362.6L491.4,363.9L492.5,362.9L493.7,362.7L494.9,360.8L496.0,362.0L497.2,360.0L498.3,356.9L499.5,358.8L500.6,358.2L501.8,358.5L502.9,357.9L504.1,358.7L505.2,357.1L506.4,355.4L507.5,355.3L508.7,355.5L509.9,355.6L511.0,355.3L512.2,353.6L513.3,352.5L514.5,353.6L515.6,351.4L516.8,352.8L517.9,351.0L519.1,351.2L520.2,350.7L521.4,347.9L522.5,350.0L523.7,349.0L524.9,348.9L526.0,348.7L527.2,347.4L528.3,344.0L529.5,344.9L530.6,343.6L531.8,344.3L532.9,343.1L534.1,343.0L535.2,343.1L536.4,339.2L537.5,342.9L538.7,342.0L539.9,340.8L541.0,340.6L542.2,340.5L543.3,338.6L544.5,338.9L545.6,338.5L546.8,339.0L547.9,338.0L549.1,336.8L550.2,337.6L551.4,336.0L552.5,335.3L553.7,336.2L554.9,334.0L556.0,333.5L557.2,332.2L558.3,331.5L559.5,333.4L560.6,330.2L561.8,330.7L562.9,331.2L564.1,330.6L565.2,330.1L566.4,329.0L567.5,328.6L568.7,327.5L569.9,328.6L571.0,325.8L572.2,327.5L573.3,326.6L574.5,325.4L575.6,325.8L576.8,324.9L577.9,323.1L579.1,321.1L580.2,323.8L581.4,322.6L582.5,322.1L583.7,322.1L584.9,319.8L586.0,320.5L587.2,320.5L588.3,319.1L589.5,317.8L590.6,315.6L591.8,318.2L592.9,317.3L594.1,316.9L595.2,315.0L596.4,316.6L597.5,315.3L598.7,315.6L599.9,314.0L601.0,312.7L602.2,310.8L603.3,311.8L604.5,311.3L605.6,312.2L606.8,311.0L607.9,311.1L609.1,309.1L610.2,308.9L611.4,309.0L612.5,305.1L612.5,310.6Z" fill="url(#g33)"/>
<path d="M492.5,364.4L492.5,341.3" stroke="url(#g33)" stroke-width="1.2"/>
<path d="M468.3,380.6L468.3,379.2L469.4,378.1L470.6,376.0L471.7,375.9L472.9,376.2L474.0,376.4L475.2,375.1L476.3,372.3L477.5,374.0L478.7,373.2L479.8,374.0L481.0,372.9L482.1,372.5L483.3,371.5L484.4,370.4L485.6,370.6L486.7,369.8L487.9,368.5L489.0,368.7L490.2,367.9L491.3,366.9L492.5,367.2L493.7,366.4L494.8,366.5L496.0,365.5L497.1,364.0L498.3,363.8L499.4,364.0L500.6,362.5L501.7,362.5L502.9,363.3L504.0,361.5L505.2,361.1L506.3,360.7L507.5,360.9L508.7,358.9L509.8,360.2L511.0,357.6L512.1,358.8L513.3,357.3L514.4,356.3L515.6,356.7L516.7,356.7L517.9,356.0L519.0,354.0L520.2,353.5L521.3,354.5L522.5,353.9L523.7,353.2L524.8,349.6L526.0,352.6L527.1,350.2L528.3,348.5L529.4,347.0L530.6,349.2L531.7,349.8L532.9,347.2L534.0,348.3L535.2,346.5L536.3,347.4L537.5,346.1L538.7,345.3L539.8,345.8L541.0,343.8L542.1,344.6L543.3,342.8L544.4,342.7L545.6,341.9L546.7,342.6L547.9,339.7L549.0,338.0L550.2,341.0L551.3,340.4L552.5,339.3L553.7,340.2L554.8,337.2L556.0,337.5L557.1,337.6L558.3,337.8L559.4,335.1L560.6,335.4L561.7,334.4L562.9,334.7L564.0,333.9L565.2,332.5L566.3,334.4L567.5,333.7L568.7,330.1L569.8,332.6L571.0,330.5L572.1,331.0L573.3,329.4L574.4,329.6L575.6,329.9L576.7,328.4L577.9,328.8L579.0,326.6L580.2,326.7L581.3,325.3L582.5,326.1L583.7,324.3L584.8,325.8L586.0,322.3L587.1,323.5L588.3,321.5L589.4,320.4L590.6,318.4L591.7,322.1L592.9,321.6L594.0,320.8L595.2,319.6L596.3,320.8L597.5,319.9L598.7,319.5L599.8,319.1L601.0,318.0L602.1,317.6L603.3,317.3L604.4,314.3L605.6,315.4L606.7,314.9L607.9,313.3L609.0,313.6L610.2,314.4L611.3,310.0L612.5,313.3L613.7,312.5L614.8,311.2L616.0,309.4L617.1,308.7L618.3,309.8L618.3,312.1Z" fill="url(#g34)"/>
<path d="M491.3,369.1L491.3,334.8M492.5,368.5L492.5,345.5M502.9,363.8L502.9,359.0M524.8,353.8L524.8,332.4M542.1,345.9L542.1,309.3" stroke="url(#g34)" stroke-width="1.2"/>
<path d="M474.0,382.1L474.0,377.9L475.2,377.6L476.3,377.2L477.5,378.6L478.6,376.7L479.8,377.7L480.9,377.2L482.1,377.0L483.2,374.9L484.4,375.2L485.5,372.2L486.7,374.0L487.8,372.7L489.0,373.6L490.2,371.0L491.3,372.7L492.5,368.1L493.6,370.3L494.8,369.8L495.9,368.3L497.1,367.0L498.2,368.4L499.4,368.6L500.5,368.6L501.7,366.2L502.8,366.4L504.0,366.4L505.2,364.8L506.3,366.0L507.5,365.5L508.6,362.5L509.8,364.4L510.9,363.6L512.1,361.2L513.2,362.4L514.4,360.7L515.5,360.9L516.7,359.6L517.8,358.7L519.0,358.3L520.2,357.2L521.3,356.5L522.5,358.1L523.6,356.4L524.8,355.3L525.9,356.4L527.1,354.0L528.2,354.2L529.4,354.3L530.5,354.7L531.7,353.0L532.8,350.8L534.0,349.8L535.2,348.6L536.3,351.5L537.5,349.3L538.6,348.8L539.8,349.5L540.9,348.4L542.1,349.2L543.2,348.4L544.4,348.1L545.5,346.5L546.7,345.2L547.8,345.6L549.0,345.7L550.2,345.1L551.3,343.3L552.5,344.9L553.6,343.0L554.8,341.5L555.9,342.2L557.1,342.8L558.2,342.1L559.4,339.6L560.5,340.1L561.7,340.1L562.8,338.2L564.0,337.5L565.2,339.0L566.3,338.1L567.5,336.9L568.6,336.4L569.8,334.7L570.9,335.9L572.1,334.0L573.2,333.2L574.4,334.0L575.5,332.0L576.7,333.1L577.8,332.1L579.0,328.1L580.2,330.3L581.3,330.8L582.5,328.9L583.6,329.1L584.8,330.0L585.9,326.4L587.1,329.1L588.2,328.2L589.4,326.4L590.5,325.7L591.7,325.1L592.8,326.4L594.0,322.8L595.2,325.3L596.3,323.3L597.5,321.9L598.6,318.6L599.8,322.5L600.9,321.4L602.1,320.1L603.2,319.6L604.4,320.8L605.5,317.2L606.7,317.7L607.8,317.9L609.0,316.8L610.2,317.7L611.3,315.3L612.5,314.7L613.6,315.0L614.8,314.1L615.9,315.1L617.1,314.7L618.2,314.4L619.4,313.3L620.5,311.2L621.7,311.8L622.8,312.6L624.0,310.7L624.0,313.6Z" fill="url(#g35)"/>
<path d="M492.5,372.7L492.5,360.1M493.6,372.1L493.6,367.6M531.7,354.8L531.7,345.2" stroke="url(#g35)" stroke-width="1.2"/>
<defs><linearGradient id="ms" x1="0" y1="1" x2="0" y2="0"><stop offset="0" stop-color="#d020f0"/><stop offset="0.3" stop-color="#4038ff"/><stop offset="0.75" stop-color="#2a80ff"/><stop offset="1" stop-color="#30d0f0"/></linearGradient><linearGradient id="mb" x1="0" y1="1" x2="0" y2="0"><stop offset="0" stop-color="#c020f0"/><stop offset="0.4" stop-color="#3838ff"/><stop offset="1" stop-color="#2a70ff"/></linearGradient></defs>
<rect x="418.0" y="268.8" width="1.2" height="66.2" fill="url(#ms)"/>
<rect x="443.4" y="264.8" width="1.2" height="83.2" fill="url(#ms)"/>
<rect x="312.4" y="268" width="1.2" height="58.0" fill="url(#mb)"/>
<rect x="324.4" y="270" width="1.2" height="58.0" fill="url(#mb)"/>
<rect x="299.9" y="286" width="1.2" height="44.0" fill="url(#mb)"/>
<path d="M458.7,300 L458.7,211.5" stroke="#9a2222" stroke-width="1.1"/>
<path d="M480.4,310 L480.4,259.7" stroke="#80c840" stroke-width="1.2"/>
<path d="M273.5,330.0L273.5,175.6L423.5,107.6L624.0,158.2L624.0,313.6M423.5,107.6L423.5,261.5L624.0,313.6M273.5,330.0L474.0,382.0L624.0,313.6" stroke="#a9a9a9" stroke-width="1.2" fill="none"/>
<g font-family="Liberation Sans, sans-serif">
<text x="0" y="0" transform="matrix(0.170,0.985,-0.900,0.420,274.0,164.4)" font-size="9" fill="#c6c6c6" text-anchor="middle" dominant-baseline="central" >0</text>
<text x="0" y="0" transform="matrix(0.170,0.985,-0.900,0.420,304.2,149.3)" font-size="9" fill="#c6c6c6" text-anchor="middle" dominant-baseline="central" >10</text>
<text x="0" y="0" transform="matrix(0.170,0.985,-0.900,0.420,334.1,135.5)" font-size="9" fill="#c6c6c6" text-anchor="middle" dominant-baseline="central" >20</text>
<text x="0" y="0" transform="matrix(0.170,0.985,-0.900,0.420,364.3,121.7)" font-size="9" fill="#c6c6c6" text-anchor="middle" dominant-baseline="central" >30</text>
<text x="0" y="0" transform="matrix(0.170,0.985,-0.900,0.420,394.0,108.6)" font-size="9" fill="#c6c6c6" text-anchor="middle" dominant-baseline="central" >40</text>
<text x="0" y="0" transform="matrix(0.170,0.985,-0.900,0.420,424.0,94.5)" font-size="9" fill="#c6c6c6" text-anchor="middle" dominant-baseline="central" >50</text>
<text x="0" y="0" transform="matrix(0.050,-1.000,0.970,0.250,472.3,104.9)" font-size="9" fill="#c6c6c6" text-anchor="middle" dominant-baseline="central" >28</text>
<text x="0" y="0" transform="matrix(0.050,-1.000,0.970,0.250,522.3,117.4)" font-size="9" fill="#c6c6c6" text-anchor="middle" dominant-baseline="central" >19</text>
<text x="0" y="0" transform="matrix(0.050,-1.000,0.970,0.250,573.0,130.3)" font-size="9" fill="#c6c6c6" text-anchor="middle" dominant-baseline="central" >10</text>
<text x="0" y="0" transform="matrix(0.050,-1.000,0.970,0.250,623.4,146.0)" font-size="9" fill="#c6c6c6" text-anchor="middle" dominant-baseline="central" >1</text>
<text x="0" y="0" transform="translate(252.5,184.0) skewY(-29)" font-size="8.8" fill="#c6c6c6" text-anchor="middle" dominant-baseline="central" letter-spacing="0">1.1E-5</text>
<text x="0" y="0" transform="translate(252.0,215.8) skewY(-29)" font-size="8.8" fill="#c6c6c6" text-anchor="middle" dominant-baseline="central" letter-spacing="0">8.8E-6</text>
<text x="0" y="0" transform="translate(252.0,246.5) skewY(-29)" font-size="8.8" fill="#c6c6c6" text-anchor="middle" dominant-baseline="central" letter-spacing="0">6.6E-6</text>
<text x="0" y="0" transform="translate(252.0,277.3) skewY(-29)" font-size="8.8" fill="#c6c6c6" text-anchor="middle" dominant-baseline="central" letter-spacing="0">4.4E-6</text>
<text x="0" y="0" transform="translate(252.0,308.0) skewY(-29)" font-size="8.8" fill="#c6c6c6" text-anchor="middle" dominant-baseline="central" letter-spacing="0">2.2E-6</text>
<text x="0" y="0" transform="translate(652.2,166.4) skewY(11)" font-size="9.2" fill="#c6c6c6" text-anchor="middle" dominant-baseline="central" letter-spacing="0.9">1.1E-5</text>
<text x="0" y="0" transform="translate(652.2,196.6) skewY(11)" font-size="9.2" fill="#c6c6c6" text-anchor="middle" dominant-baseline="central" letter-spacing="0.9">8.8E-6</text>
<text x="0" y="0" transform="translate(652.2,227.6) skewY(11)" font-size="9.2" fill="#c6c6c6" text-anchor="middle" dominant-baseline="central" letter-spacing="0.9">6.6E-6</text>
<text x="0" y="0" transform="translate(652.2,258.6) skewY(11)" font-size="9.2" fill="#c6c6c6" text-anchor="middle" dominant-baseline="central" letter-spacing="0.9">4.4E-6</text>
<text x="0" y="0" transform="translate(652.2,289.6) skewY(11)" font-size="9.2" fill="#c6c6c6" text-anchor="middle" dominant-baseline="central" letter-spacing="0.9">2.2E-6</text>
<text x="0" y="0" transform="matrix(0.968,0.251,-0.910,0.415,260.5,336.4)" font-size="8.2" fill="#c6c6c6" text-anchor="middle" dominant-baseline="central" letter-spacing="0.3">37</text>
<text x="0" y="0" transform="matrix(0.968,0.251,-0.910,0.415,308.4,349.0)" font-size="8.2" fill="#c6c6c6" text-anchor="middle" dominant-baseline="central" letter-spacing="0.3">28</text>
<text x="0" y="0" transform="matrix(0.968,0.251,-0.910,0.415,359.3,362.4)" font-size="8.2" fill="#c6c6c6" text-anchor="middle" dominant-baseline="central" letter-spacing="0.3">19</text>
<text x="0" y="0" transform="matrix(0.968,0.251,-0.910,0.415,408.7,374.4)" font-size="8.2" fill="#c6c6c6" text-anchor="middle" dominant-baseline="central" letter-spacing="0.3">10</text>
<text x="0" y="0" transform="matrix(0.968,0.251,-0.910,0.415,461.0,387.3)" font-size="8.2" fill="#c6c6c6" text-anchor="middle" dominant-baseline="central" letter-spacing="0.3">1</text>
<text x="0" y="0" transform="matrix(0.968,0.251,-0.910,0.415,489.2,385.8)" font-size="8.4" fill="#c6c6c6" text-anchor="middle" dominant-baseline="central" letter-spacing="0.4">0</text>
<text x="0" y="0" transform="matrix(0.968,0.251,-0.910,0.415,523.8,373.3)" font-size="8.4" fill="#c6c6c6" text-anchor="middle" dominant-baseline="central" letter-spacing="0.4">10</text>
<text x="0" y="0" transform="matrix(0.968,0.251,-0.910,0.415,556.4,359.0)" font-size="8.4" fill="#c6c6c6" text-anchor="middle" dominant-baseline="central" letter-spacing="0.4">20</text>
<text x="0" y="0" transform="matrix(0.968,0.251,-0.910,0.415,584.5,345.5)" font-size="8.4" fill="#c6c6c6" text-anchor="middle" dominant-baseline="central" letter-spacing="0.4">30</text>
<text x="0" y="0" transform="matrix(0.968,0.251,-0.910,0.415,613.6,331.7)" font-size="8.4" fill="#c6c6c6" text-anchor="middle" dominant-baseline="central" letter-spacing="0.4">40</text>
<text x="0" y="0" transform="matrix(0.968,0.251,-0.910,0.415,646.2,318.1)" font-size="8.4" fill="#c6c6c6" text-anchor="middle" dominant-baseline="central" letter-spacing="0.4">50</text>
<text x="0" y="0" transform="matrix(0.968,0.251,-0.910,0.415,352.5,373.2)" font-size="14.5" fill="#c6c6c6" text-anchor="middle" dominant-baseline="central" letter-spacing="1.2">Plot</text>
<text x="0" y="0" transform="matrix(0.910,-0.415,0.968,0.251,588.5,361.4)" font-size="13.5" fill="#c6c6c6" text-anchor="middle" dominant-baseline="central" letter-spacing="0.3">Frequency [Hz]</text>
<text x="0" y="0" transform="matrix(0.000,-1.000,1.000,-0.080,225.2,265.0)" font-size="12.6" fill="#c6c6c6" text-anchor="middle" dominant-baseline="central" >Amplitude</text>
<text x="0" y="0" transform="matrix(0.000,-1.000,0.968,0.251,694.5,245.5)" font-size="13.1" fill="#c6c6c6" text-anchor="middle" dominant-baseline="central" >Amplitude</text>
</g>
</svg>
</body></html>
